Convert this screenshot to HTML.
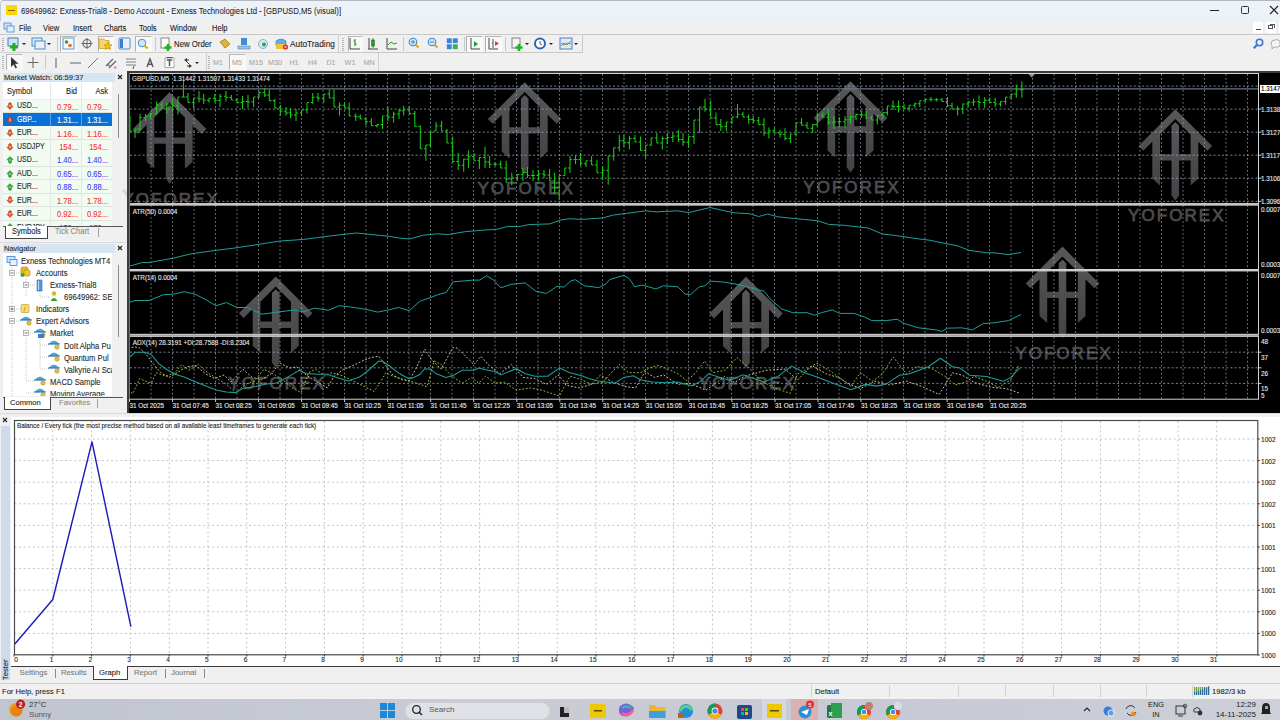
<!DOCTYPE html><html><head><meta charset="utf-8"><style>
*{margin:0;padding:0;box-sizing:border-box}
html,body{width:1280px;height:720px;overflow:hidden}
body{position:relative;background:#f0f0f0;font-family:"Liberation Sans",sans-serif;color:#000}
.a{position:absolute;white-space:nowrap;line-height:1;-webkit-text-stroke:0.1px currentColor}
.b{position:absolute}
svg{position:absolute;overflow:hidden}
</style></head><body>
<div class="b" style="left:0px;top:0px;width:1280px;height:21px;background:#edf2f9;border-top:1px solid #b4b8c0;border-left:1px solid #c8ccd2;border-top-left-radius:4px"></div>
<div class="b" style="left:6px;top:5px;width:11px;height:10px;background:#ffd500"></div>
<div class="b" style="left:8px;top:9.6px;width:7px;height:0.9px;background:#7a6a10"></div>
<div class="a" style="left:21.0px;top:6.8px;font-size:8.5px;color:#222;-webkit-text-stroke:0.05px #222;transform:scaleX(0.913);transform-origin:left center;">69649962: Exness-Trial8 - Demo Account - Exness Technologies Ltd - [GBPUSD,M5 (visual)]</div>
<div class="b" style="left:1210px;top:10px;width:9px;height:1.2px;background:#222"></div>
<div class="b" style="left:1240.5px;top:6px;width:8px;height:8px;border:1.2px solid #333;border-radius:1.5px"></div>
<svg style="left:1268px;top:5px" width="12" height="11"><path d="M2 1 L10 9 M10 1 L2 9" stroke="#222" stroke-width="1.2"/></svg>
<div class="b" style="left:0px;top:21px;width:1280px;height:13px;background:#f0f0f0"></div>
<svg style="left:3px;top:22px" width="12" height="11"><rect x="1" y="1" width="7" height="6" fill="#cfe0f4" stroke="#4a8ad0" stroke-width="0.8"/><rect x="4" y="4" width="7" height="6" fill="#e6f0fb" stroke="#4a8ad0" stroke-width="0.8"/></svg>
<div class="a" style="left:19.4px;top:23.7px;font-size:8.4px;color:#1a1a1a;transform:scaleX(0.9);transform-origin:left center;">File</div>
<div class="a" style="left:43.0px;top:23.7px;font-size:8.4px;color:#1a1a1a;transform:scaleX(0.9);transform-origin:left center;">View</div>
<div class="a" style="left:72.5px;top:23.7px;font-size:8.4px;color:#1a1a1a;transform:scaleX(0.9);transform-origin:left center;">Insert</div>
<div class="a" style="left:104.0px;top:23.7px;font-size:8.4px;color:#1a1a1a;transform:scaleX(0.9);transform-origin:left center;">Charts</div>
<div class="a" style="left:139.0px;top:23.7px;font-size:8.4px;color:#1a1a1a;transform:scaleX(0.9);transform-origin:left center;">Tools</div>
<div class="a" style="left:170.0px;top:23.7px;font-size:8.4px;color:#1a1a1a;transform:scaleX(0.9);transform-origin:left center;">Window</div>
<div class="a" style="left:211.5px;top:23.7px;font-size:8.4px;color:#1a1a1a;transform:scaleX(0.9);transform-origin:left center;">Help</div>
<div class="b" style="left:1253px;top:22px;width:10px;height:11px;background:#fff"></div>
<div class="b" style="left:1256px;top:29px;width:5px;height:1.2px;background:#445"></div>
<div class="b" style="left:1266px;top:22px;width:10px;height:11px;background:#fff"></div>
<div class="b" style="left:1268px;top:25px;width:5px;height:4px;border:1px solid #556"></div>
<div class="b" style="left:1270px;top:24px;width:5px;height:4px;border:1px solid #556;border-left:none;border-bottom:none"></div>
<div class="b" style="left:1279px;top:22px;width:1px;height:11px;background:#fff"></div>
<div class="b" style="left:0px;top:34px;width:1280px;height:1px;background:#c9c9c9"></div>
<div class="b" style="left:0px;top:35px;width:1280px;height:36px;background:#f0f0f0"></div>
<div class="b" style="left:0px;top:35px;width:339px;height:18px;border-right:1px solid #d0d0d0;border-bottom:1px solid #d0d0d0"></div>
<div class="b" style="left:339px;top:35px;width:244px;height:18px;border-right:1px solid #c8c8c8;border-bottom:1px solid #c8c8c8"></div>
<div class="b" style="left:0px;top:53px;width:207px;height:18px;border-right:1px solid #d0d0d0"></div>
<div class="b" style="left:207px;top:53px;width:172px;height:18px;border-right:1px solid #d0d0d0"></div>
<div class="b" style="left:2px;top:38px;width:2px;height:13px;background:repeating-linear-gradient(#b4b4b4 0 1px,transparent 1px 2px)"></div>
<div class="b" style="left:2px;top:56px;width:2px;height:13px;background:repeating-linear-gradient(#b4b4b4 0 1px,transparent 1px 2px)"></div>
<div class="b" style="left:342px;top:38px;width:2px;height:13px;background:repeating-linear-gradient(#b4b4b4 0 1px,transparent 1px 2px)"></div>
<div class="b" style="left:208px;top:56px;width:2px;height:13px;background:repeating-linear-gradient(#b4b4b4 0 1px,transparent 1px 2px)"></div>
<div class="b" style="left:57px;top:37px;width:1px;height:14px;background:#c8c8c8"></div>
<div class="b" style="left:155px;top:37px;width:1px;height:14px;background:#c8c8c8"></div>
<div class="b" style="left:403px;top:37px;width:1px;height:14px;background:#c8c8c8"></div>
<div class="b" style="left:464px;top:37px;width:1px;height:14px;background:#c8c8c8"></div>
<div class="b" style="left:505px;top:37px;width:1px;height:14px;background:#c8c8c8"></div>
<div class="b" style="left:45px;top:55px;width:1px;height:14px;background:#c8c8c8"></div>
<div class="b" style="left:60px;top:36px;width:17px;height:16px;background:#f8f8f8;border-left:1px solid #b0b0b0;border-top:1px solid #b8b8b8;border-right:1px solid #fafafa;border-bottom:1px solid #fafafa"></div>
<div class="b" style="left:98px;top:36px;width:16px;height:16px;background:#f8f8f8;border-left:1px solid #b0b0b0;border-top:1px solid #b8b8b8;border-right:1px solid #fafafa;border-bottom:1px solid #fafafa"></div>
<div class="b" style="left:135px;top:36px;width:17px;height:16px;background:#f8f8f8;border-left:1px solid #b0b0b0;border-top:1px solid #b8b8b8;border-right:1px solid #fafafa;border-bottom:1px solid #fafafa"></div>
<div class="b" style="left:348px;top:36px;width:15px;height:16px;background:#f8f8f8;border-left:1px solid #b0b0b0;border-top:1px solid #b8b8b8;border-right:1px solid #fafafa;border-bottom:1px solid #fafafa"></div>
<div class="b" style="left:466px;top:36px;width:17px;height:16px;background:#f8f8f8;border-left:1px solid #b0b0b0;border-top:1px solid #b8b8b8;border-right:1px solid #fafafa;border-bottom:1px solid #fafafa"></div>
<div class="b" style="left:485px;top:36px;width:17px;height:16px;background:#f8f8f8;border-left:1px solid #b0b0b0;border-top:1px solid #b8b8b8;border-right:1px solid #fafafa;border-bottom:1px solid #fafafa"></div>
<div class="b" style="left:6px;top:54px;width:17px;height:16px;background:#f8f8f8;border-left:1px solid #b0b0b0;border-top:1px solid #b8b8b8;border-right:1px solid #fafafa;border-bottom:1px solid #fafafa"></div>
<div class="b" style="left:229px;top:54px;width:17px;height:16px;background:#f8f8f8;border-left:1px solid #b0b0b0;border-top:1px solid #b8b8b8;border-right:1px solid #fafafa;border-bottom:1px solid #fafafa"></div>
<svg style="left:0;top:35px" width="600" height="17">
<rect x="8" y="3" width="10" height="8" fill="#cfe3f7" stroke="#3b82c4" stroke-width="1"/>
<path d="M14 8 v8 M10 12 h8" stroke="#1fae1f" stroke-width="3"/>
<path d="M22 8 l2 2 l2 -2z" fill="#222"/>
<rect x="32" y="3" width="10" height="8" fill="#dbe8f6" stroke="#4d8ccc" stroke-width="1"/>
<rect x="35" y="6" width="10" height="8" fill="#e8f0fa" stroke="#4d8ccc" stroke-width="1"/>
<path d="M47 8 l2 2 l2 -2z" fill="#222"/>
<rect x="63" y="3" width="11" height="11" fill="#f4f8fc" stroke="#5a9ad8" stroke-width="1"/>
<circle cx="66.5" cy="7" r="1.8" fill="#2aa52a"/><circle cx="70" cy="10.5" r="1.8" fill="#e86a30"/>
<circle cx="87" cy="8.5" r="4" fill="none" stroke="#666" stroke-width="1.2"/><path d="M87 3 v11 M81.5 8.5 h11" stroke="#666" stroke-width="1"/>
<path d="M99 4 h5 l1 1.5 h4 v8 h-10z" fill="#f7d56a" stroke="#c9a02a" stroke-width="0.8"/>
<path d="M108 7 l1.3 2.6 2.8 .3 -2.1 1.9 .6 2.8 -2.6 -1.4 -2.6 1.4 .6 -2.8 -2.1 -1.9 2.8 -.3z" fill="#f2c010" stroke="#b08800" stroke-width="0.5"/>
<rect x="119" y="3" width="11" height="11" rx="1" fill="#e9f2fb" stroke="#4a8ad0" stroke-width="1"/><rect x="120" y="4" width="3" height="9" fill="#3b7fd0"/>
<circle cx="142" cy="8" r="3.8" fill="#cfe6f8" stroke="#4a90d0" stroke-width="1"/><path d="M144.5 10.5 l3 3" stroke="#d9a520" stroke-width="2"/>
<rect x="161" y="3" width="8" height="10" fill="#fff" stroke="#777" stroke-width="0.9"/><path d="M168 9 v7 M164.5 12.5 h7" stroke="#20b020" stroke-width="2.6"/>
<path d="M220 7 l5 -3 l5 5 l-5 4z" fill="#e2b040" stroke="#a87a10" stroke-width="0.8"/>
<rect x="241" y="3" width="6" height="7" fill="#3d8ed8"/><path d="M238 11 h12 v3 h-12z" fill="#9cc4ea" stroke="#4a80c0" stroke-width="0.6"/>
<circle cx="263" cy="9" r="4.5" fill="#d7e8f5" stroke="#6aa0c8" stroke-width="0.8"/><circle cx="264" cy="9.5" r="2" fill="#30a050"/>
<path d="M276 6 q5 -4 10 0 v5 h-10z" fill="#5ab0e0" stroke="#2a78b0" stroke-width="0.6"/><rect x="276" y="9" width="9" height="5" fill="#f0c040"/><circle cx="285.5" cy="12" r="2.6" fill="#e03020"/><rect x="284.3" y="11.5" width="2.4" height="1" fill="#fff"/>
<path d="M350 3 v11 h10" stroke="#444" stroke-width="1" fill="none"/><path d="M355 4 v7 M353.5 6 h1.5 M355 9 h1.5" stroke="#22a022" stroke-width="1.2"/>
<path d="M368 14 h10 M369 3 v11" stroke="#444" stroke-width="1"/><rect x="371.5" y="5" width="3" height="6" fill="#34b434" stroke="#1b7a1b" stroke-width="0.6"/><path d="M373 3 v10" stroke="#1b7a1b" stroke-width="0.8"/>
<path d="M387 3 v11 h10" stroke="#444" stroke-width="1" fill="none"/><path d="M388 10 l3 -3 l3 2 l3 -1" stroke="#22a022" stroke-width="1" fill="none"/>
<circle cx="413" cy="7" r="3.8" fill="#cde4f7" stroke="#3c88d0" stroke-width="1.1"/><path d="M411 7 h4 M413 5 v4" stroke="#3c88d0" stroke-width="1"/><path d="M415.5 9.5 l3 3" stroke="#d4a020" stroke-width="2"/>
<circle cx="432" cy="7" r="3.8" fill="#cde4f7" stroke="#3c88d0" stroke-width="1.1"/><path d="M430 7 h4" stroke="#3c88d0" stroke-width="1"/><path d="M434.5 9.5 l3 3" stroke="#d4a020" stroke-width="2"/>
<rect x="446.5" y="3" width="5.5" height="5.5" fill="#3b82d8" stroke="#fff" stroke-width="0.5"/><rect x="452.5" y="3" width="5.5" height="5.5" fill="#3b82d8" stroke="#fff" stroke-width="0.5"/><rect x="446.5" y="9" width="5.5" height="5.5" fill="#3b82d8" stroke="#fff" stroke-width="0.5"/><rect x="452.5" y="9" width="5.5" height="5.5" fill="#3cb050" stroke="#fff" stroke-width="0.5"/>
<path d="M471 3 v11 h9" stroke="#444" stroke-width="1" fill="none"/><path d="M474 6 l4 3 l-4 3z" fill="#20a040"/>
<path d="M489 3 v11 h9" stroke="#444" stroke-width="1" fill="none"/><path d="M493 4 v9 M492 8 h1" stroke="#555" stroke-width="1"/><path d="M495 6 l4 2.5 l-4 2.5z" fill="#d84040"/>
<rect x="512" y="3" width="8" height="10" fill="#f4f4f4" stroke="#777" stroke-width="0.9"/><path d="M519 9 v7 M515.5 12.5 h7" stroke="#20b020" stroke-width="2.6"/>
<path d="M525 8 l2 2 l2 -2z" fill="#222"/>
<circle cx="540" cy="8.5" r="5" fill="#fff" stroke="#2a66b8" stroke-width="2"/><path d="M540 6 v3 l2 1" stroke="#333" stroke-width="0.8" fill="none"/>
<path d="M549 8 l2 2 l2 -2z" fill="#222"/>
<rect x="560" y="3" width="12" height="11" fill="#dce9f6" stroke="#4a80c0" stroke-width="1"/><path d="M561 11 l3 -3 l3 2 l4 -4" stroke="#d04040" stroke-width="0.8" fill="none"/><path d="M561 8 l3 2 l3 -2 l4 1" stroke="#30a040" stroke-width="0.8" fill="none"/>
<path d="M574 8 l2 2 l2 -2z" fill="#222"/>
</svg>
<div class="a" style="left:173.8px;top:39.7px;font-size:8.6px;color:#1e1e1e;transform:scaleX(0.907);transform-origin:left center;">New Order</div>
<div class="a" style="left:290.2px;top:39.7px;font-size:8.6px;color:#1e1e1e;transform:scaleX(0.965);transform-origin:left center;">AutoTrading</div>
<svg style="left:1250px;top:36px" width="30" height="16"><circle cx="9.5" cy="6.5" r="3.2" fill="none" stroke="#3a78d0" stroke-width="1.6"/><path d="M7.2 8.8 l-3.5 3.5" stroke="#3a78d0" stroke-width="2.2"/><path d="M22 5 q5 -3 8 0 v5 q-3 2 -6 1 l-2 2 v-3 q-2 -1 0 -5z" fill="#f4f4f4" stroke="#999" stroke-width="0.8"/></svg>
<svg style="left:0;top:54px" width="210" height="17">
<path d="M11 3 v10 l2.5 -2.5 l2 4 l1.5 -0.7 l-2 -4 h3.5z" fill="#333"/>
<path d="M33 3 v11 M27.5 8.5 h11" stroke="#666" stroke-width="1"/>
<path d="M56 4 v10" stroke="#777" stroke-width="1.2"/>
<path d="M70 9 h11" stroke="#777" stroke-width="1.2"/>
<path d="M88 14 l10 -10" stroke="#777" stroke-width="1"/>
<path d="M106 12 l7 -7 M109 14 l7 -7 M107.5 10 l2 2" stroke="#666" stroke-width="1.3"/><text x="114" y="15" font-size="4" fill="#666" font-family="Liberation Sans">E</text>
<path d="M126 5 h10 M126 8 h10 M126 11 h10" stroke="#777" stroke-width="0.9"/><path d="M134 12 l-1 3" stroke="#555" stroke-width="1"/>
<path d="M147 13 L150 5 L153 13 M148.2 10.3 H151.8" stroke="#555" stroke-width="1.4" fill="none"/>
<rect x="165" y="4" width="9" height="9.5" fill="#fff" stroke="#999" stroke-width="0.8"/><path d="M166.5 3.5 h6" stroke="#555" stroke-width="1"/><path d="M166.8 6 H172.2 M169.5 6 V12" stroke="#555" stroke-width="1.5"/>
<path d="M184 6 l3 -2 v1.5 h2 v1 h-2 v1.5z M192 12 l-3 2 v-1.5 h-2 v-1 h2 v-1.5z" fill="#333"/><path d="M186 7 l3 3" stroke="#333" stroke-width="1"/>
<path d="M195 8 l2 2 l2 -2z" fill="#222"/>
</svg>
<div class="a" style="left:118.0px;width:200px;text-align:center;top:58.7px;font-size:7.2px;color:#a8a8a8;">M1</div>
<div class="a" style="left:137.0px;width:200px;text-align:center;top:58.7px;font-size:7.2px;color:#a8a8a8;">M5</div>
<div class="a" style="left:156.0px;width:200px;text-align:center;top:58.7px;font-size:7.2px;color:#a8a8a8;">M15</div>
<div class="a" style="left:175.0px;width:200px;text-align:center;top:58.7px;font-size:7.2px;color:#a8a8a8;">M30</div>
<div class="a" style="left:194.0px;width:200px;text-align:center;top:58.7px;font-size:7.2px;color:#a8a8a8;">H1</div>
<div class="a" style="left:212.5px;width:200px;text-align:center;top:58.7px;font-size:7.2px;color:#a8a8a8;">H4</div>
<div class="a" style="left:231.0px;width:200px;text-align:center;top:58.7px;font-size:7.2px;color:#a8a8a8;">D1</div>
<div class="a" style="left:250.0px;width:200px;text-align:center;top:58.7px;font-size:7.2px;color:#a8a8a8;">W1</div>
<div class="a" style="left:269.0px;width:200px;text-align:center;top:58.7px;font-size:7.2px;color:#a8a8a8;">MN</div>
<div class="b" style="left:0px;top:71px;width:127px;height:342px;background:#f0f0f0"></div>
<div class="b" style="left:3px;top:73px;width:112px;height:9px;background:#d7e4f1"></div>
<div class="a" style="left:4.0px;top:73.5px;font-size:7.5px;color:#2a2a2a;">Market Watch: 06:59:37</div>
<svg style="left:116px;top:73px" width="9" height="9"><path d="M2 2 L6 6 M6 2 L2 6" stroke="#222" stroke-width="1.1"/></svg>
<div class="b" style="left:3px;top:82px;width:109px;height:143px;background:#fff"></div>
<div class="b" style="left:3px;top:98.8px;width:109px;height:1px;background:#ececec"></div>
<div class="b" style="left:50px;top:83px;width:1px;height:142px;background:#e6e6e6"></div>
<div class="b" style="left:80.5px;top:83px;width:1px;height:142px;background:#e6e6e6"></div>
<div class="a" style="left:7.0px;top:87.9px;font-size:8.2px;color:#222;transform:scaleX(0.92);transform-origin:left center;">Symbol</div>
<div class="a" style="left:-223.0px;width:300px;text-align:right;top:87.9px;font-size:8.2px;color:#222;transform:scaleX(0.92);transform-origin:right center;">Bid</div>
<div class="a" style="left:-192.0px;width:300px;text-align:right;top:87.9px;font-size:8.2px;color:#222;transform:scaleX(0.92);transform-origin:right center;">Ask</div>
<div class="b" style="left:112px;top:82px;width:11px;height:143px;background:#f0f0f0"></div>
<div class="b" style="left:117.5px;top:94px;width:1.5px;height:44px;background:#8c8c8c"></div>
<div class="b" style="left:0;top:0;width:127px;height:225.5px;overflow:hidden">
<div class="b" style="left:3px;top:99.5px;width:47px;height:12.95px;background:#f2fbf2"></div>
<div class="b" style="left:51px;top:99.5px;width:29.5px;height:12.95px;background:#f2fbf2"></div>
<div class="b" style="left:81.5px;top:99.5px;width:30.5px;height:12.95px;background:#f2fbf2"></div>
<svg style="left:5.5px;top:102.2px" width="8" height="8" viewBox="0 0 9 9"><path d="M4.5 8.4 L8.2 4.7 L6.2 4.7 L6.2 1.8 L4.5 0.4 L2.8 1.8 L2.8 4.7 L0.8 4.7 Z" fill="#e2502a" stroke="#a83010" stroke-width="0.5"/><circle cx="4.5" cy="4.4" r="1.3" fill="#ff9a70"/></svg>
<div class="b" style="left:3px;top:112.15px;width:109px;height:0.8px;background:#dde3dd"></div>
<div class="a" style="left:17.0px;top:102.4px;font-size:8.2px;color:#2a2a2a;transform:scaleX(0.86);transform-origin:left center;">USD...</div>
<div class="a" style="left:-222.0px;width:300px;text-align:right;top:102.6px;font-size:8.4px;color:#fa3232;transform:scaleX(0.9);transform-origin:right center;">0.79...</div>
<div class="a" style="left:-192.0px;width:300px;text-align:right;top:102.6px;font-size:8.4px;color:#fa3232;transform:scaleX(0.9);transform-origin:right center;">0.79...</div>
<div class="b" style="left:3px;top:112.95px;width:109px;height:13.45px;background:#0a70d6"></div>
<div class="b" style="left:50px;top:112.95px;width:1px;height:13.45px;background:#5a9ee4"></div>
<div class="b" style="left:80.5px;top:112.95px;width:1px;height:13.45px;background:#5a9ee4"></div>
<svg style="left:5.5px;top:115.7px" width="8" height="8" viewBox="0 0 9 9"><path d="M4.5 8.4 L8.2 4.7 L6.2 4.7 L6.2 1.8 L4.5 0.4 L2.8 1.8 L2.8 4.7 L0.8 4.7 Z" fill="#e2502a" stroke="#a83010" stroke-width="0.5"/><circle cx="4.5" cy="4.4" r="1.3" fill="#ff9a70"/></svg>
<div class="a" style="left:17.0px;top:115.9px;font-size:8.2px;color:#ffffff;transform:scaleX(0.86);transform-origin:left center;">GBP...</div>
<div class="a" style="left:-222.0px;width:300px;text-align:right;top:116.1px;font-size:8.4px;color:#ffffff;transform:scaleX(0.9);transform-origin:right center;">1.31...</div>
<div class="a" style="left:-192.0px;width:300px;text-align:right;top:116.1px;font-size:8.4px;color:#ffffff;transform:scaleX(0.9);transform-origin:right center;">1.31...</div>
<div class="b" style="left:3px;top:126.4px;width:47px;height:12.95px;background:#f2fbf2"></div>
<div class="b" style="left:51px;top:126.4px;width:29.5px;height:12.95px;background:#f2fbf2"></div>
<div class="b" style="left:81.5px;top:126.4px;width:30.5px;height:12.95px;background:#f2fbf2"></div>
<svg style="left:5.5px;top:129.1px" width="8" height="8" viewBox="0 0 9 9"><path d="M4.5 8.4 L8.2 4.7 L6.2 4.7 L6.2 1.8 L4.5 0.4 L2.8 1.8 L2.8 4.7 L0.8 4.7 Z" fill="#e2502a" stroke="#a83010" stroke-width="0.5"/><circle cx="4.5" cy="4.4" r="1.3" fill="#ff9a70"/></svg>
<div class="b" style="left:3px;top:139.04999999999998px;width:109px;height:0.8px;background:#dde3dd"></div>
<div class="a" style="left:17.0px;top:129.3px;font-size:8.2px;color:#2a2a2a;transform:scaleX(0.86);transform-origin:left center;">EUR...</div>
<div class="a" style="left:-222.0px;width:300px;text-align:right;top:129.5px;font-size:8.4px;color:#fa3232;transform:scaleX(0.9);transform-origin:right center;">1.16...</div>
<div class="a" style="left:-192.0px;width:300px;text-align:right;top:129.5px;font-size:8.4px;color:#fa3232;transform:scaleX(0.9);transform-origin:right center;">1.16...</div>
<div class="b" style="left:3px;top:139.85px;width:47px;height:12.95px;background:#f2fbf2"></div>
<div class="b" style="left:51px;top:139.85px;width:29.5px;height:12.95px;background:#f2fbf2"></div>
<div class="b" style="left:81.5px;top:139.85px;width:30.5px;height:12.95px;background:#f2fbf2"></div>
<svg style="left:5.5px;top:142.6px" width="8" height="8" viewBox="0 0 9 9"><path d="M4.5 8.4 L8.2 4.7 L6.2 4.7 L6.2 1.8 L4.5 0.4 L2.8 1.8 L2.8 4.7 L0.8 4.7 Z" fill="#e2502a" stroke="#a83010" stroke-width="0.5"/><circle cx="4.5" cy="4.4" r="1.3" fill="#ff9a70"/></svg>
<div class="b" style="left:3px;top:152.49999999999997px;width:109px;height:0.8px;background:#dde3dd"></div>
<div class="a" style="left:17.0px;top:142.8px;font-size:8.2px;color:#2a2a2a;transform:scaleX(0.86);transform-origin:left center;">USDJPY</div>
<div class="a" style="left:-222.0px;width:300px;text-align:right;top:143.0px;font-size:8.4px;color:#fa3232;transform:scaleX(0.9);transform-origin:right center;">154...</div>
<div class="a" style="left:-192.0px;width:300px;text-align:right;top:143.0px;font-size:8.4px;color:#fa3232;transform:scaleX(0.9);transform-origin:right center;">154...</div>
<div class="b" style="left:3px;top:153.3px;width:47px;height:12.95px;background:#f2fbf2"></div>
<div class="b" style="left:51px;top:153.3px;width:29.5px;height:12.95px;background:#f2fbf2"></div>
<div class="b" style="left:81.5px;top:153.3px;width:30.5px;height:12.95px;background:#f2fbf2"></div>
<svg style="left:5.5px;top:156.0px" width="8" height="8" viewBox="0 0 9 9"><path d="M4.5 0.6 L8.2 4.3 L6.2 4.3 L6.2 7.2 L4.5 8.6 L2.8 7.2 L2.8 4.3 L0.8 4.3 Z" fill="#34a83a" stroke="#1f7a26" stroke-width="0.5"/><circle cx="4.5" cy="4.6" r="1.3" fill="#7ad47e"/></svg>
<div class="b" style="left:3px;top:165.95px;width:109px;height:0.8px;background:#dde3dd"></div>
<div class="a" style="left:17.0px;top:156.2px;font-size:8.2px;color:#2a2a2a;transform:scaleX(0.86);transform-origin:left center;">USD...</div>
<div class="a" style="left:-222.0px;width:300px;text-align:right;top:156.4px;font-size:8.4px;color:#4038f8;transform:scaleX(0.9);transform-origin:right center;">1.40...</div>
<div class="a" style="left:-192.0px;width:300px;text-align:right;top:156.4px;font-size:8.4px;color:#4038f8;transform:scaleX(0.9);transform-origin:right center;">1.40...</div>
<div class="b" style="left:3px;top:166.75px;width:47px;height:12.95px;background:#f2fbf2"></div>
<div class="b" style="left:51px;top:166.75px;width:29.5px;height:12.95px;background:#f2fbf2"></div>
<div class="b" style="left:81.5px;top:166.75px;width:30.5px;height:12.95px;background:#f2fbf2"></div>
<svg style="left:5.5px;top:169.5px" width="8" height="8" viewBox="0 0 9 9"><path d="M4.5 0.6 L8.2 4.3 L6.2 4.3 L6.2 7.2 L4.5 8.6 L2.8 7.2 L2.8 4.3 L0.8 4.3 Z" fill="#34a83a" stroke="#1f7a26" stroke-width="0.5"/><circle cx="4.5" cy="4.6" r="1.3" fill="#7ad47e"/></svg>
<div class="b" style="left:3px;top:179.39999999999998px;width:109px;height:0.8px;background:#dde3dd"></div>
<div class="a" style="left:17.0px;top:169.7px;font-size:8.2px;color:#2a2a2a;transform:scaleX(0.86);transform-origin:left center;">AUD...</div>
<div class="a" style="left:-222.0px;width:300px;text-align:right;top:169.9px;font-size:8.4px;color:#4038f8;transform:scaleX(0.9);transform-origin:right center;">0.65...</div>
<div class="a" style="left:-192.0px;width:300px;text-align:right;top:169.9px;font-size:8.4px;color:#4038f8;transform:scaleX(0.9);transform-origin:right center;">0.65...</div>
<div class="b" style="left:3px;top:180.2px;width:47px;height:12.95px;background:#f2fbf2"></div>
<div class="b" style="left:51px;top:180.2px;width:29.5px;height:12.95px;background:#f2fbf2"></div>
<div class="b" style="left:81.5px;top:180.2px;width:30.5px;height:12.95px;background:#f2fbf2"></div>
<svg style="left:5.5px;top:182.9px" width="8" height="8" viewBox="0 0 9 9"><path d="M4.5 0.6 L8.2 4.3 L6.2 4.3 L6.2 7.2 L4.5 8.6 L2.8 7.2 L2.8 4.3 L0.8 4.3 Z" fill="#34a83a" stroke="#1f7a26" stroke-width="0.5"/><circle cx="4.5" cy="4.6" r="1.3" fill="#7ad47e"/></svg>
<div class="b" style="left:3px;top:192.84999999999997px;width:109px;height:0.8px;background:#dde3dd"></div>
<div class="a" style="left:17.0px;top:183.1px;font-size:8.2px;color:#2a2a2a;transform:scaleX(0.86);transform-origin:left center;">EUR...</div>
<div class="a" style="left:-222.0px;width:300px;text-align:right;top:183.3px;font-size:8.4px;color:#4038f8;transform:scaleX(0.9);transform-origin:right center;">0.88...</div>
<div class="a" style="left:-192.0px;width:300px;text-align:right;top:183.3px;font-size:8.4px;color:#4038f8;transform:scaleX(0.9);transform-origin:right center;">0.88...</div>
<div class="b" style="left:3px;top:193.64999999999998px;width:47px;height:12.95px;background:#f2fbf2"></div>
<div class="b" style="left:51px;top:193.64999999999998px;width:29.5px;height:12.95px;background:#f2fbf2"></div>
<div class="b" style="left:81.5px;top:193.64999999999998px;width:30.5px;height:12.95px;background:#f2fbf2"></div>
<svg style="left:5.5px;top:196.4px" width="8" height="8" viewBox="0 0 9 9"><path d="M4.5 8.4 L8.2 4.7 L6.2 4.7 L6.2 1.8 L4.5 0.4 L2.8 1.8 L2.8 4.7 L0.8 4.7 Z" fill="#e2502a" stroke="#a83010" stroke-width="0.5"/><circle cx="4.5" cy="4.4" r="1.3" fill="#ff9a70"/></svg>
<div class="b" style="left:3px;top:206.29999999999995px;width:109px;height:0.8px;background:#dde3dd"></div>
<div class="a" style="left:17.0px;top:196.6px;font-size:8.2px;color:#2a2a2a;transform:scaleX(0.86);transform-origin:left center;">EUR...</div>
<div class="a" style="left:-222.0px;width:300px;text-align:right;top:196.8px;font-size:8.4px;color:#fa3232;transform:scaleX(0.9);transform-origin:right center;">1.78...</div>
<div class="a" style="left:-192.0px;width:300px;text-align:right;top:196.8px;font-size:8.4px;color:#fa3232;transform:scaleX(0.9);transform-origin:right center;">1.78...</div>
<div class="b" style="left:3px;top:207.1px;width:47px;height:12.95px;background:#f2fbf2"></div>
<div class="b" style="left:51px;top:207.1px;width:29.5px;height:12.95px;background:#f2fbf2"></div>
<div class="b" style="left:81.5px;top:207.1px;width:30.5px;height:12.95px;background:#f2fbf2"></div>
<svg style="left:5.5px;top:209.8px" width="8" height="8" viewBox="0 0 9 9"><path d="M4.5 8.4 L8.2 4.7 L6.2 4.7 L6.2 1.8 L4.5 0.4 L2.8 1.8 L2.8 4.7 L0.8 4.7 Z" fill="#e2502a" stroke="#a83010" stroke-width="0.5"/><circle cx="4.5" cy="4.4" r="1.3" fill="#ff9a70"/></svg>
<div class="b" style="left:3px;top:219.74999999999997px;width:109px;height:0.8px;background:#dde3dd"></div>
<div class="a" style="left:17.0px;top:210.0px;font-size:8.2px;color:#2a2a2a;transform:scaleX(0.86);transform-origin:left center;">EUR...</div>
<div class="a" style="left:-222.0px;width:300px;text-align:right;top:210.2px;font-size:8.4px;color:#fa3232;transform:scaleX(0.9);transform-origin:right center;">0.92...</div>
<div class="a" style="left:-192.0px;width:300px;text-align:right;top:210.2px;font-size:8.4px;color:#fa3232;transform:scaleX(0.9);transform-origin:right center;">0.92...</div>
<div class="b" style="left:3px;top:220.55px;width:47px;height:12.95px;background:#f2fbf2"></div>
<div class="b" style="left:51px;top:220.55px;width:29.5px;height:12.95px;background:#f2fbf2"></div>
<div class="b" style="left:81.5px;top:220.55px;width:30.5px;height:12.95px;background:#f2fbf2"></div>
<svg style="left:5.5px;top:223.3px" width="8" height="8" viewBox="0 0 9 9"><path d="M4.5 0.6 L8.2 4.3 L6.2 4.3 L6.2 7.2 L4.5 8.6 L2.8 7.2 L2.8 4.3 L0.8 4.3 Z" fill="#34a83a" stroke="#1f7a26" stroke-width="0.5"/><circle cx="4.5" cy="4.6" r="1.3" fill="#7ad47e"/></svg>
<div class="b" style="left:3px;top:233.2px;width:109px;height:0.8px;background:#dde3dd"></div>
<div class="a" style="left:17.0px;top:223.5px;font-size:8.2px;color:#2a2a2a;transform:scaleX(0.86);transform-origin:left center;">EURJPY</div>
<div class="a" style="left:-222.0px;width:300px;text-align:right;top:223.7px;font-size:8.4px;color:#4038f8;transform:scaleX(0.9);transform-origin:right center;">179...</div>
<div class="a" style="left:-192.0px;width:300px;text-align:right;top:223.7px;font-size:8.4px;color:#4038f8;transform:scaleX(0.9);transform-origin:right center;">179...</div>
</div>
<div class="b" style="left:3px;top:225.5px;width:120px;height:1px;background:#555"></div>
<div class="b" style="left:4.5px;top:225.5px;width:43px;height:13px;background:#fff;border:1px solid #444;border-top:none"></div>
<div class="a" style="left:11.5px;top:228.4px;font-size:8.2px;color:#222;transform:scaleX(0.92);transform-origin:left center;">Symbols</div>
<div class="a" style="left:55.4px;top:228.4px;font-size:8.2px;color:#8c8c8c;transform:scaleX(0.92);transform-origin:left center;">Tick Chart</div>
<div class="b" style="left:97.5px;top:228px;width:1px;height:9px;background:#a0a0a0"></div>
<div class="b" style="left:0px;top:241.5px;width:127px;height:1px;background:#dcdcdc"></div>
<div class="b" style="left:3px;top:244px;width:112px;height:8.5px;background:#d7e4f1"></div>
<div class="a" style="left:4.0px;top:244.6px;font-size:7.5px;color:#2a2a2a;">Navigator</div>
<svg style="left:116px;top:244px" width="9" height="9"><path d="M2 2 L6 6 M6 2 L2 6" stroke="#222" stroke-width="1.1"/></svg>
<div class="b" style="left:3px;top:253px;width:109px;height:143px;background:#fff"></div>
<div class="b" style="left:112px;top:253px;width:11px;height:143px;background:#f0f0f0"></div>
<div class="b" style="left:117.5px;top:265px;width:1.5px;height:72px;background:#8c8c8c"></div>
<svg style="left:0;top:253px" width="112" height="143">
<g stroke="#b8b8b8" stroke-width="0.8" stroke-dasharray="1 1" fill="none">
<path d="M12 14 V68 M12 20 H22 M12 56 H22 M12 68 H22"/>
<path d="M12 68 V143 M26 80 V128 M26 128 H36 M26 140 H36 M26 80 H36"/>
<path d="M26 26 V44 M26 32 H36 M40 38 V44 M40 44 H50"/>
<path d="M40 86 V116 M40 92 H50 M40 104 H50 M40 116 H50"/>
</g>
<rect x="9.5" y="17.5" width="5" height="5" fill="#fff" stroke="#999" stroke-width="0.7"/><path d="M10.5 20 h3" stroke="#333" stroke-width="0.7"/>
<rect x="23.5" y="29.5" width="5" height="5" fill="#fff" stroke="#999" stroke-width="0.7"/><path d="M24.5 32 h3" stroke="#333" stroke-width="0.7"/>
<rect x="9.5" y="53.5" width="5" height="5" fill="#fff" stroke="#999" stroke-width="0.7"/><path d="M10.5 56 h3 M12 54.5 v3" stroke="#333" stroke-width="0.7"/>
<rect x="9.5" y="65.5" width="5" height="5" fill="#fff" stroke="#999" stroke-width="0.7"/><path d="M10.5 68 h3" stroke="#333" stroke-width="0.7"/>
<rect x="23.5" y="77.5" width="5" height="5" fill="#fff" stroke="#999" stroke-width="0.7"/><path d="M24.5 80 h3" stroke="#333" stroke-width="0.7"/>
<rect x="7" y="3.5" width="8" height="6" fill="#d0e4f8" stroke="#3a86d0" stroke-width="0.8"/><rect x="10" y="6.5" width="7" height="6" fill="#e4f0fb" stroke="#3a86d0" stroke-width="0.8"/>
<rect x="21" y="14" width="7" height="7" rx="1.5" fill="#e8b820" stroke="#b08010" stroke-width="0.6"/><rect x="24" y="17" width="6" height="6" rx="1.5" fill="#f0c830" stroke="#b08010" stroke-width="0.6"/><circle cx="22.5" cy="22" r="2" fill="#2ab02a"/>
<path d="M37 27 h5 v11 h-5z" fill="#4a9be0" stroke="#2a70b8" stroke-width="0.6"/><path d="M38.5 28 v9" stroke="#e6f2fc" stroke-width="0.8"/>
<circle cx="54" cy="40.5" r="2.3" fill="#e0b030"/><path d="M50.5 48 q3.5 -6 7 0z" fill="#30a030"/>
<rect x="21" y="51.5" width="8" height="8" rx="1" fill="#f6df80" stroke="#c8a020" stroke-width="0.7"/><text x="23.5" y="58.3" font-size="7" fill="#b07010" font-family="Liberation Serif" font-style="italic">f</text>

<path d="M21 67 q5 -6 10 0 z" fill="#4aa8e0" stroke="#2a78b0" stroke-width="0.5"/><path d="M20 67 h12" stroke="#2a78b0" stroke-width="1"/><circle cx="29" cy="70" r="2.2" fill="#e8c040" stroke="#a08020" stroke-width="0.5"/><path d="M35 79 q5 -6 10 0 z" fill="#4aa8e0" stroke="#2a78b0" stroke-width="0.5"/><path d="M34 79 h12" stroke="#2a78b0" stroke-width="1"/><circle cx="43" cy="82" r="2.2" fill="#e8c040" stroke="#a08020" stroke-width="0.5"/><rect x="38" y="81" width="6" height="4" fill="#3a7ad0"/><path d="M49 91 q5 -6 10 0 z" fill="#4aa8e0" stroke="#2a78b0" stroke-width="0.5"/><path d="M48 91 h12" stroke="#2a78b0" stroke-width="1"/><circle cx="57" cy="94" r="2.2" fill="#e8c040" stroke="#a08020" stroke-width="0.5"/><path d="M49 103 q5 -6 10 0 z" fill="#4aa8e0" stroke="#2a78b0" stroke-width="0.5"/><path d="M48 103 h12" stroke="#2a78b0" stroke-width="1"/><circle cx="57" cy="106" r="2.2" fill="#e8c040" stroke="#a08020" stroke-width="0.5"/><path d="M49 115 q5 -6 10 0 z" fill="#4aa8e0" stroke="#2a78b0" stroke-width="0.5"/><path d="M48 115 h12" stroke="#2a78b0" stroke-width="1"/><circle cx="57" cy="118" r="2.2" fill="#e8c040" stroke="#a08020" stroke-width="0.5"/><path d="M35 127 q5 -6 10 0 z" fill="#4aa8e0" stroke="#2a78b0" stroke-width="0.5"/><path d="M34 127 h12" stroke="#2a78b0" stroke-width="1"/><circle cx="43" cy="130" r="2.2" fill="#e8c040" stroke="#a08020" stroke-width="0.5"/><path d="M35 139 q5 -6 10 0 z" fill="#4aa8e0" stroke="#2a78b0" stroke-width="0.5"/><path d="M34 139 h12" stroke="#2a78b0" stroke-width="1"/><circle cx="43" cy="142" r="2.2" fill="#e8c040" stroke="#a08020" stroke-width="0.5"/></svg>
<div class="b" style="left:3px;top:253px;width:109px;height:143px;overflow:hidden">
<div class="a" style="left:18.0px;top:3.7px;font-size:8.5px;color:#2a2a2a;transform:scaleX(0.9);transform-origin:left center;">Exness Technologies MT4</div>
<div class="a" style="left:32.5px;top:15.8px;font-size:8.5px;color:#2a2a2a;transform:scaleX(0.9);transform-origin:left center;">Accounts</div>
<div class="a" style="left:46.5px;top:28.0px;font-size:8.5px;color:#2a2a2a;transform:scaleX(0.9);transform-origin:left center;">Exness-Trial8</div>
<div class="a" style="left:60.5px;top:40.0px;font-size:8.5px;color:#2a2a2a;transform:scaleX(0.9);transform-origin:left center;">69649962: SEC</div>
<div class="a" style="left:32.5px;top:52.1px;font-size:8.5px;color:#2a2a2a;transform:scaleX(0.9);transform-origin:left center;">Indicators</div>
<div class="a" style="left:32.5px;top:64.2px;font-size:8.5px;color:#2a2a2a;transform:scaleX(0.9);transform-origin:left center;">Expert Advisors</div>
<div class="a" style="left:46.5px;top:76.3px;font-size:8.5px;color:#2a2a2a;transform:scaleX(0.9);transform-origin:left center;">Market</div>
<div class="a" style="left:60.5px;top:88.5px;font-size:8.5px;color:#2a2a2a;transform:scaleX(0.9);transform-origin:left center;">DoIt Alpha Pu</div>
<div class="a" style="left:60.5px;top:100.5px;font-size:8.5px;color:#2a2a2a;transform:scaleX(0.9);transform-origin:left center;">Quantum Pul</div>
<div class="a" style="left:60.5px;top:112.7px;font-size:8.5px;color:#2a2a2a;transform:scaleX(0.9);transform-origin:left center;">Valkyrie AI Sca</div>
<div class="a" style="left:46.5px;top:124.8px;font-size:8.5px;color:#2a2a2a;transform:scaleX(0.9);transform-origin:left center;">MACD Sample</div>
<div class="a" style="left:46.5px;top:137.0px;font-size:8.5px;color:#2a2a2a;transform:scaleX(0.9);transform-origin:left center;">Moving Average</div>
</div>
<div class="b" style="left:3px;top:396.5px;width:120px;height:1px;background:#555"></div>
<div class="b" style="left:4px;top:396.5px;width:47px;height:13px;background:#fff;border:1px solid #444;border-top:none"></div>
<div class="a" style="left:10.0px;top:399.2px;font-size:7.6px;color:#222;">Common</div>
<div class="a" style="left:59.0px;top:399.2px;font-size:7.6px;color:#8c8c8c;">Favorites</div>
<div class="b" style="left:97px;top:399px;width:1px;height:9px;background:#a0a0a0"></div>
<svg style="left:118px;top:188px" width="9" height="16"><text x="4.4" y="14.3" font-family="Liberation Sans" font-size="17" fill="#d2d2d2" stroke="#d2d2d2" stroke-width="0.75">Y</text></svg>
<div class="b" style="left:127px;top:71px;width:1153px;height:342px;background:#000"></div>
<svg style="left:127px;top:71px" width="1153" height="342"><g transform="translate(-127,-71)"><rect x="127" y="71" width="1153" height="342" fill="#000"/><rect x="127" y="71" width="2" height="342" fill="#3c3c3c"/><rect x="127" y="71" width="1153" height="2" fill="#3c3c3c"/><linearGradient id="lg" gradientUnits="objectBoundingBox" x1="0" y1="0" x2="0" y2="1"><stop offset="0" stop-color="#58585b"/><stop offset="1" stop-color="#444447"/></linearGradient><clipPath id="cm"><rect x="130" y="74" width="1128.5" height="129.5"/></clipPath><clipPath id="c1"><rect x="130" y="205.5" width="1128.5" height="63.5"/></clipPath><clipPath id="c2"><rect x="130" y="271.5" width="1128.5" height="62.5"/></clipPath><clipPath id="c3"><rect x="130" y="337" width="1128.5" height="62"/></clipPath><clipPath id="call"><rect x="130" y="74" width="1128.5" height="325"/></clipPath><g clip-path="url(#call)"><path d="M169.6 92.3 L206.39999999999998 129.1 L201.6 133.9 L192.6 124.9 V161.7 L184.9 168.7 V143.7 H154.29999999999998 V168.7 L146.6 161.7 V124.9 L137.6 133.9 L132.8 129.1 Z M169.6 102.2 L154.29999999999998 117.5 V137.4 H184.9 V117.5 Z" fill="url(#lg)" fill-rule="evenodd"/><path d="M169.6 105.1 L173.4 108.9 V178.3 L169.6 183.89999999999998 L165.79999999999998 178.3 V108.9 Z" fill="url(#lg)"/><text x="171.1" y="204.5" text-anchor="middle" font-family="Liberation Sans" font-size="17" letter-spacing="2.05" fill="#4c4c4e" stroke="#4c4c4e" stroke-width="0.75">YOFOREX</text><path d="M524.7 82.2 L561.5 119.0 L556.7 123.80000000000001 L547.7 114.80000000000001 V151.60000000000002 L540.0 158.60000000000002 V133.6 H509.40000000000003 V158.60000000000002 L501.70000000000005 151.60000000000002 V114.80000000000001 L492.70000000000005 123.80000000000001 L487.90000000000003 119.0 Z M524.7 92.10000000000001 L509.40000000000003 107.4 V127.30000000000001 H540.0 V107.4 Z" fill="url(#lg)" fill-rule="evenodd"/><path d="M524.7 95.0 L528.5 98.80000000000001 V168.2 L524.7 173.8 L520.9000000000001 168.2 V98.80000000000001 Z" fill="url(#lg)"/><text x="526.2" y="194.4" text-anchor="middle" font-family="Liberation Sans" font-size="17" letter-spacing="2.05" fill="#4c4c4e" stroke="#4c4c4e" stroke-width="0.75">YOFOREX</text><path d="M850.5 81.2 L887.3 118.0 L882.5 122.80000000000001 L873.5 113.80000000000001 V150.60000000000002 L865.8 157.60000000000002 V132.6 H835.2 V157.60000000000002 L827.5 150.60000000000002 V113.80000000000001 L818.5 122.80000000000001 L813.7 118.0 Z M850.5 91.10000000000001 L835.2 106.4 V126.30000000000001 H865.8 V106.4 Z" fill="url(#lg)" fill-rule="evenodd"/><path d="M850.5 94.0 L854.3 97.80000000000001 V167.2 L850.5 172.8 L846.7 167.2 V97.80000000000001 Z" fill="url(#lg)"/><text x="852.0" y="193.4" text-anchor="middle" font-family="Liberation Sans" font-size="17" letter-spacing="2.05" fill="#4c4c4e" stroke="#4c4c4e" stroke-width="0.75">YOFOREX</text><path d="M1175.3 109.2 L1212.1 146.0 L1207.3 150.8 L1198.3 141.8 V178.60000000000002 L1190.6 185.60000000000002 V160.6 H1160.0 V185.60000000000002 L1152.3 178.60000000000002 V141.8 L1143.3 150.8 L1138.5 146.0 Z M1175.3 119.10000000000001 L1160.0 134.4 V154.3 H1190.6 V134.4 Z" fill="url(#lg)" fill-rule="evenodd"/><path d="M1175.3 122.0 L1179.1 125.80000000000001 V195.2 L1175.3 200.8 L1171.5 195.2 V125.80000000000001 Z" fill="url(#lg)"/><text x="1176.8" y="221.4" text-anchor="middle" font-family="Liberation Sans" font-size="17" letter-spacing="2.05" fill="#4c4c4e" stroke="#4c4c4e" stroke-width="0.75">YOFOREX</text><path d="M275.7 276.5 L312.5 313.3 L307.7 318.1 L298.7 309.1 V345.9 L291.0 352.9 V327.9 H260.4 V352.9 L252.7 345.9 V309.1 L243.7 318.1 L238.89999999999998 313.3 Z M275.7 286.4 L260.4 301.7 V321.6 H291.0 V301.7 Z" fill="url(#lg)" fill-rule="evenodd"/><path d="M275.7 289.3 L279.5 293.1 V362.5 L275.7 368.1 L271.9 362.5 V293.1 Z" fill="url(#lg)"/><text x="277.2" y="388.7" text-anchor="middle" font-family="Liberation Sans" font-size="17" letter-spacing="2.05" fill="#4c4c4e" stroke="#4c4c4e" stroke-width="0.75">YOFOREX</text><path d="M746 276.8 L782.8 313.6 L778 318.40000000000003 L769 309.40000000000003 V346.20000000000005 L761.3 353.20000000000005 V328.2 H730.7 V353.20000000000005 L723 346.20000000000005 V309.40000000000003 L714 318.40000000000003 L709.2 313.6 Z M746 286.7 L730.7 302.0 V321.90000000000003 H761.3 V302.0 Z" fill="url(#lg)" fill-rule="evenodd"/><path d="M746 289.6 L749.8 293.40000000000003 V362.8 L746 368.4 L742.2 362.8 V293.40000000000003 Z" fill="url(#lg)"/><text x="747.5" y="389.0" text-anchor="middle" font-family="Liberation Sans" font-size="17" letter-spacing="2.05" fill="#4c4c4e" stroke="#4c4c4e" stroke-width="0.75">YOFOREX</text><path d="M1062.5 246.6 L1099.3 283.4 L1094.5 288.2 L1085.5 279.2 V316.0 L1077.8 323.0 V298.0 H1047.2 V323.0 L1039.5 316.0 V279.2 L1030.5 288.2 L1025.7 283.4 Z M1062.5 256.5 L1047.2 271.8 V291.7 H1077.8 V271.8 Z" fill="url(#lg)" fill-rule="evenodd"/><path d="M1062.5 259.4 L1066.3 263.2 V332.6 L1062.5 338.2 L1058.7 332.6 V263.2 Z" fill="url(#lg)"/><text x="1064.0" y="358.8" text-anchor="middle" font-family="Liberation Sans" font-size="17" letter-spacing="2.05" fill="#4c4c4e" stroke="#4c4c4e" stroke-width="0.75">YOFOREX</text></g><rect x="129" y="203.3" width="1130" height="2" fill="#b4b4b4"/><rect x="129" y="269.2" width="1130" height="2" fill="#b4b4b4"/><rect x="129" y="334" width="1130" height="1.3" fill="#707070"/><rect x="129" y="335.5" width="1130" height="1.3" fill="#c8c8c8"/><path d="M151.0 74V203.3 M151.0 205.3V269.2 M151.0 271.2V334 M151.0 336.8V399 M172.5 74V203.3 M172.5 205.3V269.2 M172.5 271.2V334 M172.5 336.8V399 M194.0 74V203.3 M194.0 205.3V269.2 M194.0 271.2V334 M194.0 336.8V399 M215.5 74V203.3 M215.5 205.3V269.2 M215.5 271.2V334 M215.5 336.8V399 M237.0 74V203.3 M237.0 205.3V269.2 M237.0 271.2V334 M237.0 336.8V399 M258.5 74V203.3 M258.5 205.3V269.2 M258.5 271.2V334 M258.5 336.8V399 M280.0 74V203.3 M280.0 205.3V269.2 M280.0 271.2V334 M280.0 336.8V399 M301.5 74V203.3 M301.5 205.3V269.2 M301.5 271.2V334 M301.5 336.8V399 M323.0 74V203.3 M323.0 205.3V269.2 M323.0 271.2V334 M323.0 336.8V399 M344.5 74V203.3 M344.5 205.3V269.2 M344.5 271.2V334 M344.5 336.8V399 M366.0 74V203.3 M366.0 205.3V269.2 M366.0 271.2V334 M366.0 336.8V399 M387.5 74V203.3 M387.5 205.3V269.2 M387.5 271.2V334 M387.5 336.8V399 M409.0 74V203.3 M409.0 205.3V269.2 M409.0 271.2V334 M409.0 336.8V399 M430.5 74V203.3 M430.5 205.3V269.2 M430.5 271.2V334 M430.5 336.8V399 M452.0 74V203.3 M452.0 205.3V269.2 M452.0 271.2V334 M452.0 336.8V399 M473.5 74V203.3 M473.5 205.3V269.2 M473.5 271.2V334 M473.5 336.8V399 M495.0 74V203.3 M495.0 205.3V269.2 M495.0 271.2V334 M495.0 336.8V399 M516.5 74V203.3 M516.5 205.3V269.2 M516.5 271.2V334 M516.5 336.8V399 M538.0 74V203.3 M538.0 205.3V269.2 M538.0 271.2V334 M538.0 336.8V399 M559.5 74V203.3 M559.5 205.3V269.2 M559.5 271.2V334 M559.5 336.8V399 M581.0 74V203.3 M581.0 205.3V269.2 M581.0 271.2V334 M581.0 336.8V399 M602.5 74V203.3 M602.5 205.3V269.2 M602.5 271.2V334 M602.5 336.8V399 M624.0 74V203.3 M624.0 205.3V269.2 M624.0 271.2V334 M624.0 336.8V399 M645.5 74V203.3 M645.5 205.3V269.2 M645.5 271.2V334 M645.5 336.8V399 M667.0 74V203.3 M667.0 205.3V269.2 M667.0 271.2V334 M667.0 336.8V399 M688.5 74V203.3 M688.5 205.3V269.2 M688.5 271.2V334 M688.5 336.8V399 M710.0 74V203.3 M710.0 205.3V269.2 M710.0 271.2V334 M710.0 336.8V399 M731.5 74V203.3 M731.5 205.3V269.2 M731.5 271.2V334 M731.5 336.8V399 M753.0 74V203.3 M753.0 205.3V269.2 M753.0 271.2V334 M753.0 336.8V399 M774.5 74V203.3 M774.5 205.3V269.2 M774.5 271.2V334 M774.5 336.8V399 M796.0 74V203.3 M796.0 205.3V269.2 M796.0 271.2V334 M796.0 336.8V399 M817.5 74V203.3 M817.5 205.3V269.2 M817.5 271.2V334 M817.5 336.8V399 M839.0 74V203.3 M839.0 205.3V269.2 M839.0 271.2V334 M839.0 336.8V399 M860.5 74V203.3 M860.5 205.3V269.2 M860.5 271.2V334 M860.5 336.8V399 M882.0 74V203.3 M882.0 205.3V269.2 M882.0 271.2V334 M882.0 336.8V399 M903.5 74V203.3 M903.5 205.3V269.2 M903.5 271.2V334 M903.5 336.8V399 M925.0 74V203.3 M925.0 205.3V269.2 M925.0 271.2V334 M925.0 336.8V399 M946.5 74V203.3 M946.5 205.3V269.2 M946.5 271.2V334 M946.5 336.8V399 M968.0 74V203.3 M968.0 205.3V269.2 M968.0 271.2V334 M968.0 336.8V399 M989.5 74V203.3 M989.5 205.3V269.2 M989.5 271.2V334 M989.5 336.8V399 M1011.0 74V203.3 M1011.0 205.3V269.2 M1011.0 271.2V334 M1011.0 336.8V399 M1032.5 74V203.3 M1032.5 205.3V269.2 M1032.5 271.2V334 M1032.5 336.8V399 M1054.0 74V203.3 M1054.0 205.3V269.2 M1054.0 271.2V334 M1054.0 336.8V399 M1075.5 74V203.3 M1075.5 205.3V269.2 M1075.5 271.2V334 M1075.5 336.8V399 M1097.0 74V203.3 M1097.0 205.3V269.2 M1097.0 271.2V334 M1097.0 336.8V399 M1118.5 74V203.3 M1118.5 205.3V269.2 M1118.5 271.2V334 M1118.5 336.8V399 M1140.0 74V203.3 M1140.0 205.3V269.2 M1140.0 271.2V334 M1140.0 336.8V399 M1161.5 74V203.3 M1161.5 205.3V269.2 M1161.5 271.2V334 M1161.5 336.8V399 M1183.0 74V203.3 M1183.0 205.3V269.2 M1183.0 271.2V334 M1183.0 336.8V399 M1204.5 74V203.3 M1204.5 205.3V269.2 M1204.5 271.2V334 M1204.5 336.8V399 M1226.0 74V203.3 M1226.0 205.3V269.2 M1226.0 271.2V334 M1226.0 336.8V399 M1247.5 74V203.3 M1247.5 205.3V269.2 M1247.5 271.2V334 M1247.5 336.8V399" stroke="#97a3b0" stroke-width="1" stroke-dasharray="1.6 2.4" fill="none" opacity="0.8"/><path d="M130 86.1H1258.5 M130 109.1H1258.5 M130 132.2H1258.5 M130 155.2H1258.5 M130 178.2H1258.5 M130 201.3H1258.5 M130 352.2H1258.5 M130 367.8H1258.5 M130 383.4H1258.5" stroke="#97a3b0" stroke-width="1" stroke-dasharray="2 2.2" fill="none" opacity="0.8"/><path d="M130 88.9H1258.5" stroke="#6d7783" stroke-width="1.2"/><g clip-path="url(#cm)"><path d="M130.0 116.0V131.0M128.0 123.5H130.0M130.0 131.0H132.0M135.0 129.0V138.0M133.0 131.0H135.0M135.0 129.0H137.0M140.0 114.0V131.0M138.0 129.0H140.0M140.0 117.5H142.0M145.5 114.0V121.0M143.5 117.5H145.5M145.5 116.2H147.5M150.5 113.5V119.0M148.5 116.2H150.5M150.5 113.5H152.5M156.6 101.5V114.5M154.6 113.5H156.6M156.6 104.8H158.6M161.8 101.5V108.0M159.8 104.8H161.8M161.8 108.0H163.8M166.8 103.0V113.6M164.8 108.0H166.8M166.8 104.0H168.8M172.3 99.0V109.0M170.3 104.0H172.3M172.3 105.8H174.3M177.9 97.0V114.5M175.9 105.8H177.9M177.9 97.0H179.9M183.4 81.0V97.0M181.4 97.0H183.4M183.4 97.0H185.4M188.0 93.0V102.5M186.0 97.0H188.0M188.0 102.5H190.0M193.6 98.0V108.0M191.6 102.5H193.6M193.6 98.0H195.6M199.0 91.0V102.5M197.0 98.0H199.0M199.0 99.0H201.0M203.7 94.0V104.0M201.7 99.0H203.7M203.7 100.2H205.7M209.0 98.0V102.5M207.0 100.2H209.0M209.0 98.2H211.0M214.8 94.0V102.5M212.8 98.2H214.8M214.8 100.5H216.8M220.0 94.0V107.0M218.0 100.5H220.0M220.0 96.2H222.0M226.0 91.0V101.5M224.0 96.2H226.0M226.0 97.5H228.0M231.4 95.0V100.0M229.4 97.5H231.4M231.4 100.0H233.4M237.0 98.0V102.5M235.0 100.0H237.0M237.0 102.5H239.0M242.5 96.0V109.0M240.5 102.5H242.5M242.5 101.5H244.5M248.0 95.0V108.0M246.0 101.5H248.0M248.0 102.0H250.0M253.6 97.0V107.0M251.6 102.0H253.6M253.6 97.0H255.6M259.0 91.0V98.0M257.0 97.0H259.0M259.0 92.5H261.0M264.7 88.0V97.0M262.7 92.5H264.7M264.7 95.0H266.7M269.3 89.5V100.6M267.3 95.0H269.3M269.3 100.6H271.3M274.8 99.0V108.0M272.8 100.6H274.8M274.8 108.0H276.8M280.4 105.0V116.0M278.4 108.0H280.4M280.4 111.2H282.4M286.0 107.0V115.4M284.0 111.2H286.0M286.0 113.0H288.0M290.5 108.0V118.0M288.5 113.0H290.5M290.5 115.0H292.5M296.0 109.0V121.0M294.0 115.0H296.0M296.0 113.0H298.0M301.6 110.0V116.0M299.6 113.0H301.6M301.6 110.0H303.6M307.0 102.5V113.6M305.0 110.0H307.0M307.0 102.5H309.0M312.7 93.0V104.0M310.7 102.5H312.7M312.7 97.2H314.7M318.0 93.0V101.5M316.0 97.2H318.0M318.0 98.2H320.0M323.8 94.0V102.5M321.8 98.2H323.8M323.8 94.0H325.8M329.3 89.5V98.0M327.3 94.0H329.3M329.3 98.0H331.3M334.0 89.5V107.0M332.0 98.0H334.0M334.0 107.0H336.0M339.5 102.5V115.4M337.5 107.0H339.5M339.5 105.2H341.5M344.6 102.5V108.0M342.6 105.2H344.6M344.6 108.0H346.6M349.2 102.5V116.0M347.2 108.0H349.2M349.2 116.0H351.2M355.7 113.6V121.0M353.7 116.0H355.7M355.7 116.8H357.7M360.3 114.5V119.0M358.3 116.8H360.3M360.3 119.0H362.3M365.9 117.0V125.6M363.9 119.0H365.9M365.9 121.8H367.9M371.4 118.0V125.6M369.4 121.8H371.4M371.4 125.6H373.4M377.0 124.6V127.4M375.0 125.6H377.0M377.0 124.6H379.0M382.5 116.0V129.0M380.5 124.6H382.5M382.5 116.0H384.5M388.0 107.0V121.0M386.0 116.0H388.0M388.0 117.2H390.0M393.6 111.7V122.8M391.6 117.2H393.6M393.6 114.0H395.6M399.0 109.0V119.0M397.0 114.0H399.0M399.0 110.7H401.0M403.7 106.0V115.4M401.7 110.7H403.7M403.7 109.8H405.7M409.3 106.0V113.6M407.3 109.8H409.3M409.3 113.6H411.3M414.8 111.0V126.5M412.8 113.6H414.8M414.8 126.5H416.8M420.3 125.6V148.7M418.3 126.5H420.3M420.3 148.7H422.3M425.9 145.0V160.7M423.9 148.7H425.9M425.9 145.0H427.9M430.5 132.0V146.8M428.5 145.0H430.5M430.5 132.0H432.5M436.0 122.0V131.0M434.0 131.0H436.0M436.0 126.0H438.0M441.6 121.0V131.0M439.6 126.0H441.6M441.6 131.0H443.6M447.0 129.0V143.0M445.0 131.0H447.0M447.0 143.0H449.0M452.7 136.6V162.5M450.7 143.0H452.7M452.7 161.5H454.7M458.2 153.0V170.0M456.2 161.5H458.2M458.2 165.2H460.2M463.7 158.8V171.7M461.7 165.2H463.7M463.7 159.2H465.7M468.4 150.5V168.0M466.4 159.2H468.4M468.4 156.8H470.4M474.0 153.0V160.7M472.0 156.8H474.0M474.0 160.7H476.0M479.4 157.0V169.0M477.4 160.7H479.4M479.4 157.4H481.4M485.0 146.8V168.0M483.0 157.4H485.0M485.0 162.0H487.0M489.6 156.0V168.0M487.6 162.0H489.6M489.6 164.2H491.6M495.2 162.5V166.0M493.2 164.2H495.2M495.2 164.3H497.2M500.7 160.7V168.0M498.7 164.3H500.7M500.7 168.0H502.7M506.2 160.7V183.0M504.2 168.0H506.2M506.2 179.1H508.2M511.8 172.7V185.6M509.8 179.1H511.8M511.8 177.8H513.8M517.3 174.5V181.0M515.3 177.8H517.3M517.3 174.5H519.3M522.9 168.0V181.0M520.9 174.5H522.9M522.9 172.5H524.9M527.5 167.0V178.0M525.5 172.5H527.5M527.5 175.5H529.5M533.0 170.0V181.0M531.0 175.5H533.0M533.0 175.5H535.0M538.6 170.0V181.0M536.6 175.5H538.6M538.6 174.0H540.6M544.0 170.0V178.0M542.0 174.0H544.0M544.0 175.0H546.0M549.6 169.0V181.0M547.6 175.0H549.6M549.6 181.0H551.6M554.6 172.7V194.0M552.6 181.0H554.6M554.6 187.4H556.6M559.2 175.4V199.5M557.2 187.4H559.2M559.2 175.4H561.2M564.8 168.0V175.4M562.8 175.4H564.8M564.8 168.0H566.8M570.0 156.0V172.7M568.0 168.0H570.0M570.0 159.5H572.0M575.5 155.0V164.0M573.5 159.5H575.5M575.5 159.5H577.5M580.5 153.0V166.0M578.5 159.5H580.5M580.5 163.8H582.5M586.0 160.7V167.0M584.0 163.8H586.0M586.0 160.7H588.0M591.6 156.0V165.0M589.6 160.7H591.6M591.6 165.0H593.6M597.0 159.7V172.7M595.0 165.0H597.0M597.0 172.7H599.0M602.6 166.0V180.0M600.6 172.7H602.6M602.6 170.3H604.6M608.2 156.0V184.7M606.2 170.3H608.2M608.2 156.0H610.2M613.7 147.7V160.7M611.7 156.0H613.7M613.7 147.7H615.7M619.3 134.8V151.4M617.3 147.7H619.3M619.3 140.8H621.3M623.9 134.8V146.8M621.9 140.8H623.9M623.9 142.6H625.9M629.4 135.7V149.6M627.4 142.6H629.4M629.4 138.4H631.4M635.0 134.8V142.0M633.0 138.4H635.0M635.0 142.0H637.0M640.5 136.6V150.5M638.5 142.0H640.5M640.5 150.5H642.5M645.7 145.0V158.0M643.7 150.5H645.7M645.7 145.0H647.7M651.2 137.6V146.0M649.2 145.0H651.2M651.2 138.0H653.2M656.8 133.0V143.0M654.8 138.0H656.8M656.8 143.0H658.8M662.3 136.6V149.6M660.3 143.0H662.3M662.3 138.5H664.3M667.3 133.0V144.0M665.3 138.5H667.3M667.3 137.5H669.3M672.8 133.0V142.0M670.8 137.5H672.8M672.8 136.0H674.8M678.4 130.0V142.0M676.4 136.0H678.4M678.4 139.5H680.4M683.0 133.0V146.0M681.0 139.5H683.0M683.0 142.1H685.0M688.5 136.6V147.7M686.5 142.1H688.5M688.5 136.6H690.5M694.0 120.0V144.0M692.0 136.6H694.0M694.0 120.0H696.0M699.6 107.0V133.0M697.6 120.0H699.6M699.6 107.0H701.6M705.0 98.8V111.7M703.0 107.0H705.0M705.0 109.3H707.0M710.7 100.6V118.0M708.7 109.3H710.7M710.7 118.0H712.7M716.0 112.6V124.6M714.0 118.0H716.0M716.0 124.6H718.0M720.8 119.0V131.0M718.8 124.6H720.8M720.8 126.5H722.8M726.4 122.0V131.0M724.4 126.5H726.4M726.4 122.0H728.4M732.0 117.0V123.7M730.0 122.0H732.0M732.0 117.0H734.0M737.5 104.0V118.0M735.5 117.0H737.5M737.5 114.3H739.5M743.0 111.7V117.0M741.0 114.3H743.0M743.0 117.0H745.0M748.6 114.5V123.7M746.6 117.0H748.6M748.6 119.4H750.6M753.2 116.0V122.8M751.2 119.4H753.2M753.2 120.8H755.2M758.7 117.0V124.6M756.7 120.8H758.7M758.7 124.6H760.7M764.0 118.0V135.7M762.0 124.6H764.0M764.0 132.9H766.0M768.9 127.4V138.5M766.9 132.9H768.9M768.9 130.7H770.9M774.4 128.3V133.0M772.4 130.7H774.4M774.4 133.0H776.4M780.0 130.0V137.6M778.0 133.0H780.0M780.0 134.3H782.0M785.0 128.3V140.3M783.0 134.3H785.0M785.0 138.4H787.0M790.5 133.9V143.0M788.5 138.4H790.5M790.5 133.9H792.5M796.0 122.8V136.6M794.0 133.9H796.0M796.0 122.8H798.0M801.6 118.0V125.6M799.6 122.8H801.6M801.6 125.2H803.6M807.0 122.0V128.3M805.0 125.2H807.0M807.0 128.3H809.0M812.6 124.6V133.0M810.6 128.3H812.6M812.6 124.6H814.6M817.3 112.6V126.5M815.3 124.6H817.3M817.3 115.3H819.3M822.8 112.6V118.0M820.8 115.3H822.8M822.8 117.3H824.8M828.3 110.0V124.6M826.3 117.3H828.3M828.3 122.5H830.3M833.9 116.0V129.0M831.9 122.5H833.9M833.9 121.8H835.9M839.4 117.0V126.5M837.4 121.8H839.4M839.4 121.7H841.4M845.0 116.0V127.4M843.0 121.7H845.0M845.0 119.8H847.0M850.5 116.0V123.7M848.5 119.8H850.5M850.5 116.8H852.5M856.0 113.6V120.0M854.0 116.8H856.0M856.0 114.4H858.0M861.6 110.8V118.0M859.6 114.4H861.6M861.6 114.9H863.6M866.2 110.8V119.0M864.2 114.9H866.2M866.2 117.7H868.2M871.7 115.4V120.0M869.7 117.7H871.7M871.7 120.0H873.7M877.3 115.4V124.6M875.3 120.0H877.3M877.3 115.4H879.3M882.8 112.6V118.0M880.8 115.4H882.8M882.8 112.6H884.8M887.4 106.0V115.4M885.4 112.6H887.4M887.4 106.0H889.4M893.0 100.6V109.9M891.0 106.0H893.0M893.0 106.6H895.0M898.5 100.6V112.6M896.5 106.6H898.5M898.5 106.7H900.5M904.0 104.3V109.0M902.0 106.7H904.0M904.0 108.3H906.0M909.2 105.0V111.7M907.2 108.3H909.2M909.2 105.2H911.2M914.8 102.5V108.0M912.8 105.2H914.8M914.8 103.8H916.8M919.8 100.6V107.0M917.8 103.8H919.8M919.8 100.7H921.8M925.3 98.8V102.5M923.3 100.7H925.3M925.3 99.2H927.3M930.9 97.0V101.5M928.9 99.2H930.9M930.9 99.7H932.9M936.4 97.9V101.5M934.4 99.7H936.4M936.4 99.7H938.4M942.0 97.9V101.5M940.0 99.7H942.0M942.0 101.5H944.0M947.5 97.0V107.0M945.5 101.5H947.5M947.5 105.8H949.5M952.0 102.5V109.0M950.0 105.8H952.0M952.0 109.0H954.0M957.6 106.0V115.4M955.6 109.0H957.6M957.6 108.7H959.6M962.8 103.4V114.0M960.8 108.7H962.8M962.8 104.0H964.8M968.2 101.0V107.0M966.2 104.0H968.2M968.2 102.3H970.2M973.5 98.7V106.0M971.5 102.3H973.5M973.5 101.8H975.5M979.0 95.5V108.0M977.0 101.8H979.0M979.0 102.5H981.0M984.7 96.9V108.0M982.7 102.5H984.7M984.7 100.1H986.7M989.8 97.8V102.4M987.8 100.1H989.8M989.8 102.4H991.8M995.2 97.8V107.0M993.2 102.4H995.2M995.2 104.0H997.2M1000.5 101.5V106.6M998.5 104.0H1000.5M1000.5 101.5H1002.5M1005.6 96.9V104.8M1003.6 101.5H1005.6M1005.6 96.9H1007.6M1011.2 94.0V99.2M1009.2 96.9H1011.2M1011.2 94.0H1013.2M1016.3 84.8V97.8M1014.3 94.0H1016.3M1016.3 89.7H1018.3M1021.9 81.5V97.8M1019.9 89.7H1021.9M1021.9 89.5H1023.9" stroke="#18cc18" stroke-width="1.05" fill="none"/></g><path d="M129.8 266.1 L142.0 262.6 L149.0 262.6 L173.7 258.0 L191.3 253.8 L215.9 250.3 L233.5 248.2 L254.6 245.0 L279.2 241.1 L303.8 239.4 L324.9 236.6 L346.0 234.1 L356.6 233.0 L367.1 234.1 L388.2 236.2 L398.8 238.0 L409.3 239.0 L423.4 235.2 L437.4 233.8 L448.0 234.5 L465.6 231.6 L483.1 230.2 L497.2 229.2 L507.7 226.4 L518.3 226.7 L528.9 224.6 L550.0 223.9 L560.5 220.0 L570.0 218.7 L580.8 219.4 L602.3 218.0 L613.1 215.1 L627.5 213.3 L645.5 210.8 L656.2 211.9 L677.8 210.8 L688.6 212.6 L710.1 207.5 L724.5 210.8 L735.3 212.9 L749.7 213.7 L758.6 216.5 L767.6 214.0 L778.4 216.9 L796.4 218.7 L817.9 220.8 L828.7 224.4 L843.1 225.2 L868.2 228.0 L882.6 234.1 L893.4 235.2 L915.0 238.4 L929.3 240.2 L943.7 243.1 L958.1 246.0 L968.9 250.3 L986.8 252.8 L994.0 252.8 L1008.4 254.6 L1021.0 252.5" stroke="#1f9f9a" stroke-width="1.0" fill="none" clip-path="url(#c1)"/><path d="M128.0 302.9 L135.0 300.5 L149.1 300.5 L163.2 294.8 L173.7 294.1 L184.3 291.7 L194.8 294.1 L205.4 299.4 L215.9 305.7 L226.5 302.6 L237.0 307.5 L247.5 307.5 L261.6 314.2 L275.7 312.4 L293.3 310.0 L303.8 311.7 L314.4 308.2 L328.4 310.3 L339.0 305.7 L349.5 306.8 L367.1 309.6 L377.6 312.1 L388.2 310.0 L398.7 307.5 L409.3 310.7 L419.8 301.2 L430.4 297.6 L437.4 294.8 L446.2 292.4 L453.2 281.8 L465.6 280.8 L472.6 280.1 L479.6 280.1 L486.6 275.8 L493.7 280.1 L500.7 287.8 L511.3 284.3 L525.3 282.9 L535.9 291.3 L546.4 293.4 L557.0 286.4 L564.0 287.1 L571.0 280.8 L575.4 279.7 L584.4 285.8 L598.7 287.6 L605.9 284.0 L609.5 279.7 L623.9 275.3 L629.3 278.6 L634.7 286.8 L641.9 285.0 L656.2 289.0 L663.4 285.8 L677.8 286.8 L685.0 294.0 L690.4 294.7 L699.4 286.8 L704.7 285.8 L710.1 281.1 L724.5 282.2 L735.3 284.0 L749.7 287.6 L764.0 291.2 L771.2 300.1 L782.0 309.1 L792.8 312.7 L807.2 312.7 L814.3 315.2 L821.5 312.7 L832.3 309.8 L839.5 313.4 L853.9 313.4 L864.6 317.0 L871.8 320.6 L886.2 320.6 L897.0 319.2 L904.2 323.5 L918.5 327.8 L936.5 330.0 L941.9 331.4 L947.3 328.2 L961.7 327.8 L972.4 330.0 L983.2 323.5 L994.0 322.8 L1008.4 320.6 L1021.0 314.5" stroke="#1f9f9a" stroke-width="1.0" fill="none" clip-path="url(#c2)"/><path d="M128.0 348.1 L135.0 346.9 L139.7 348.1 L146.7 355.1 L153.8 364.5 L160.8 372.7 L169.0 377.4 L177.2 372.7 L186.6 366.8 L196.0 365.6 L205.3 373.8 L214.7 378.5 L224.1 375.0 L231.1 382.0 L242.8 369.2 L252.2 377.4 L261.6 379.7 L271.0 373.8 L280.3 363.3 L289.7 368.0 L296.7 366.8 L306.1 375.0 L315.5 380.9 L327.2 387.9 L334.2 376.2 L343.6 369.2 L353.0 365.6 L364.7 359.8 L371.7 357.4 L378.8 356.3 L385.8 365.6 L392.8 375.0 L402.2 379.7 L409.2 380.9 L416.3 368.0 L424.7 349.2 L431.7 359.8 L441.1 369.2 L452.8 347.6 L457.5 348.1 L464.5 355.1 L473.9 364.5 L480.9 356.3 L488.0 364.5 L499.7 373.8 L511.4 364.5 L523.1 377.4 L534.8 378.5 L546.6 384.4 L558.3 375.0 L567.6 385.6 L579.4 387.9 L591.1 384.4 L600.5 375.0 L612.2 382.0 L626.2 386.7 L635.6 387.9 L645.0 371.5 L654.4 377.4 L663.7 375.0 L677.8 384.4 L689.5 383.2 L705.9 390.2 L724.8 376.4 L734.5 382.4 L744.2 376.4 L766.0 370.3 L785.4 369.1 L797.5 380.0 L812.0 365.5 L826.6 374.0 L838.7 377.6 L850.8 384.9 L860.5 388.5 L875.0 381.2 L889.5 384.9 L906.5 381.2 L921.0 386.1 L939.2 394.5 L952.5 372.8 L962.2 375.2 L974.3 382.4 L991.3 387.3 L1005.8 388.5 L1020.3 393.3" stroke="#d8c49a" stroke-width="1.0" fill="none" stroke-dasharray="1.8 1.8" clip-path="url(#c3)"/><path d="M128.0 390.2 L132.7 393.8 L139.7 378.5 L144.4 380.9 L151.4 383.2 L156.1 372.7 L165.5 376.2 L174.9 372.7 L181.9 364.5 L188.9 370.3 L198.3 364.5 L207.7 372.7 L217.1 378.5 L226.4 384.4 L235.8 392.6 L245.2 384.4 L254.6 380.9 L263.9 369.2 L273.3 373.8 L282.7 379.7 L292.0 387.9 L301.4 392.6 L308.5 372.7 L315.5 369.2 L324.9 376.2 L331.9 372.7 L343.6 376.2 L355.3 382.0 L364.7 386.7 L374.1 391.4 L381.1 380.9 L385.8 372.7 L392.8 376.2 L399.9 378.5 L409.2 380.9 L416.3 383.2 L427.0 386.7 L434.1 361.0 L441.1 364.5 L450.5 375.0 L462.2 383.2 L471.6 377.4 L478.6 383.2 L485.6 376.2 L495.0 383.2 L504.4 382.0 L516.1 390.2 L530.1 387.9 L541.9 390.2 L559.4 396.1 L570.0 376.2 L581.7 379.7 L591.1 384.4 L602.8 382.0 L619.2 364.5 L628.6 372.7 L640.3 372.7 L652.0 366.8 L659.0 365.6 L668.4 369.2 L677.8 373.8 L687.2 380.9 L696.5 371.5 L704.7 361.0 L712.9 372.7 L724.8 370.3 L737.0 357.7 L749.1 367.9 L761.2 381.2 L775.7 388.5 L790.2 393.3 L797.5 374.0 L804.8 370.3 L816.9 363.1 L829.0 370.3 L841.1 378.8 L850.8 386.1 L860.5 372.8 L872.6 381.2 L882.3 374.0 L893.2 357.0 L906.5 374.0 L916.2 366.7 L930.7 367.9 L945.2 376.4 L954.9 384.9 L964.6 382.4 L974.3 376.4 L986.4 381.2 L998.5 387.3 L1010.6 380.0 L1019.1 364.3" stroke="#8cc03a" stroke-width="1.0" fill="none" stroke-dasharray="1.8 1.8" clip-path="url(#c3)"/><path d="M128.0 358.6 L135.0 352.3 L144.4 352.3 L151.4 354.6 L158.5 363.3 L165.5 368.7 L174.9 374.3 L184.2 376.9 L196.0 382.0 L207.7 386.7 L217.1 390.2 L226.4 392.1 L235.8 392.6 L242.8 388.4 L254.6 386.7 L266.3 383.9 L275.6 383.2 L287.4 377.4 L299.1 370.3 L306.1 373.4 L317.8 374.3 L327.2 374.3 L336.6 377.4 L348.3 380.9 L360.0 376.7 L367.0 371.5 L378.8 361.0 L383.4 361.7 L390.5 366.8 L399.9 373.8 L409.2 379.0 L413.9 377.4 L420.0 374.3 L424.7 368.7 L430.5 369.2 L436.4 373.8 L445.8 377.4 L452.8 375.7 L462.2 370.3 L473.9 370.3 L478.6 368.0 L488.0 370.3 L495.0 371.5 L500.9 375.0 L516.1 368.7 L525.5 373.8 L534.8 376.2 L547.7 376.2 L559.4 368.0 L570.0 372.7 L581.7 375.7 L588.7 378.5 L598.1 380.9 L614.5 383.2 L623.9 377.4 L633.3 375.7 L640.3 379.7 L652.0 382.0 L666.1 382.7 L677.8 382.0 L691.9 386.0 L701.2 380.9 L708.3 373.8 L729.7 380.5 L743.0 374.7 L763.6 382.0 L778.1 376.4 L791.4 366.0 L804.8 372.8 L816.9 377.1 L833.8 383.6 L850.8 389.7 L865.3 384.4 L877.4 386.1 L887.1 383.6 L899.2 375.2 L908.9 374.0 L928.3 366.7 L940.4 358.2 L952.5 366.7 L959.8 367.9 L969.5 375.2 L986.4 376.4 L1003.4 381.2 L1010.6 377.6 L1020.3 367.4" stroke="#1f9f9a" stroke-width="1.05" fill="none" clip-path="url(#c3)"/><path d="M1028.5 74 L1035 74 L1031.7 77.5z" fill="#8a96a3"/><g fill="none" stroke="#d4d4d4" stroke-width="1"><rect x="129.5" y="73.5" width="1129" height="130.2"/><rect x="129.5" y="205" width="1129" height="64.5"/><rect x="129.5" y="270.8" width="1129" height="63.5"/><rect x="129.5" y="336" width="1129" height="63.2"/></g><rect x="129" y="73" width="1" height="327" fill="#747474"/><path d="M1259 109.1h2.5 M1259 132.2h2.5 M1259 155.2h2.5 M1259 178.2h2.5 M1259 201.3h2.5 M1259 352.2h2.5 M1259 367.8h2.5 M1259 383.4h2.5" stroke="#ccc" stroke-width="1"/><path d="M129.5 399v3 M172.5 399v3 M215.6 399v3 M258.6 399v3 M301.6 399v3 M344.6 399v3 M387.7 399v3 M430.7 399v3 M473.7 399v3 M516.8 399v3 M559.8 399v3 M602.8 399v3 M645.9 399v3 M688.9 399v3 M731.9 399v3 M775.0 399v3 M818.0 399v3 M861.0 399v3 M904.0 399v3 M947.1 399v3 M990.1 399v3" stroke="#ccc" stroke-width="1"/></g></svg>
<div class="a" style="left:132.0px;top:76.2px;font-size:6.35px;color:#e8e8e8;">GBPUSD,M5&nbsp; 1.31442 1.31507 1.31433 1.31474</div>
<div class="a" style="left:132.7px;top:208.7px;font-size:6.35px;color:#e8e8e8;">ATR(50) 0.0004</div>
<div class="a" style="left:132.7px;top:274.7px;font-size:6.35px;color:#e8e8e8;">ATR(14) 0.0004</div>
<div class="a" style="left:132.7px;top:340.3px;font-size:6.35px;color:#e8e8e8;">ADX(14) 28.3191 +DI:28.7588 -DI:8.2304</div>
<div class="b" style="left:1259.5px;top:85.3px;width:21px;height:7.4px;background:#fff"></div>
<div class="a" style="left:1261.0px;top:86.4px;font-size:6.35px;color:#000;">1.3147</div>
<div class="a" style="left:1261.0px;top:106.6px;font-size:6.35px;color:#e8e8e8;">1.3138</div>
<div class="a" style="left:1261.0px;top:129.7px;font-size:6.35px;color:#e8e8e8;">1.3127</div>
<div class="a" style="left:1261.0px;top:152.7px;font-size:6.35px;color:#e8e8e8;">1.3117</div>
<div class="a" style="left:1261.0px;top:175.7px;font-size:6.35px;color:#e8e8e8;">1.3106</div>
<div class="a" style="left:1261.0px;top:198.5px;font-size:6.35px;color:#e8e8e8;">1.3096</div>
<div class="a" style="left:1261.0px;top:207.0px;font-size:6.35px;color:#e8e8e8;">0.0007</div>
<div class="a" style="left:1261.0px;top:262.0px;font-size:6.35px;color:#e8e8e8;">0.0003</div>
<div class="a" style="left:1261.0px;top:273.0px;font-size:6.35px;color:#e8e8e8;">0.0007</div>
<div class="a" style="left:1261.0px;top:328.0px;font-size:6.35px;color:#e8e8e8;">0.0003</div>
<div class="a" style="left:1261.0px;top:338.5px;font-size:6.35px;color:#e8e8e8;">48</div>
<div class="a" style="left:1261.0px;top:355.0px;font-size:6.35px;color:#e8e8e8;">37</div>
<div class="a" style="left:1261.0px;top:371.2px;font-size:6.35px;color:#e8e8e8;">26</div>
<div class="a" style="left:1261.0px;top:386.3px;font-size:6.35px;color:#e8e8e8;">15</div>
<div class="a" style="left:1261.0px;top:392.7px;font-size:6.35px;color:#e8e8e8;">5</div>
<div class="a" style="left:129.4px;top:403.1px;font-size:6.35px;color:#f0f0f0;">31 Oct 2025</div>
<div class="a" style="left:172.4px;top:403.1px;font-size:6.35px;color:#f0f0f0;">31 Oct 07:45</div>
<div class="a" style="left:215.5px;top:403.1px;font-size:6.35px;color:#f0f0f0;">31 Oct 08:25</div>
<div class="a" style="left:258.5px;top:403.1px;font-size:6.35px;color:#f0f0f0;">31 Oct 09:05</div>
<div class="a" style="left:301.5px;top:403.1px;font-size:6.35px;color:#f0f0f0;">31 Oct 09:45</div>
<div class="a" style="left:344.6px;top:403.1px;font-size:6.35px;color:#f0f0f0;">31 Oct 10:25</div>
<div class="a" style="left:387.6px;top:403.1px;font-size:6.35px;color:#f0f0f0;">31 Oct 11:05</div>
<div class="a" style="left:430.6px;top:403.1px;font-size:6.35px;color:#f0f0f0;">31 Oct 11:45</div>
<div class="a" style="left:473.6px;top:403.1px;font-size:6.35px;color:#f0f0f0;">31 Oct 12:25</div>
<div class="a" style="left:516.7px;top:403.1px;font-size:6.35px;color:#f0f0f0;">31 Oct 13:05</div>
<div class="a" style="left:559.7px;top:403.1px;font-size:6.35px;color:#f0f0f0;">31 Oct 13:45</div>
<div class="a" style="left:602.7px;top:403.1px;font-size:6.35px;color:#f0f0f0;">31 Oct 14:25</div>
<div class="a" style="left:645.8px;top:403.1px;font-size:6.35px;color:#f0f0f0;">31 Oct 15:05</div>
<div class="a" style="left:688.8px;top:403.1px;font-size:6.35px;color:#f0f0f0;">31 Oct 15:45</div>
<div class="a" style="left:731.8px;top:403.1px;font-size:6.35px;color:#f0f0f0;">31 Oct 16:25</div>
<div class="a" style="left:774.9px;top:403.1px;font-size:6.35px;color:#f0f0f0;">31 Oct 17:05</div>
<div class="a" style="left:817.9px;top:403.1px;font-size:6.35px;color:#f0f0f0;">31 Oct 17:45</div>
<div class="a" style="left:860.9px;top:403.1px;font-size:6.35px;color:#f0f0f0;">31 Oct 18:25</div>
<div class="a" style="left:903.9px;top:403.1px;font-size:6.35px;color:#f0f0f0;">31 Oct 19:05</div>
<div class="a" style="left:947.0px;top:403.1px;font-size:6.35px;color:#f0f0f0;">31 Oct 19:45</div>
<div class="a" style="left:990.0px;top:403.1px;font-size:6.35px;color:#f0f0f0;">31 Oct 20:25</div>
<div class="b" style="left:0px;top:413px;width:1280px;height:270px;background:#f0f0f0"></div>
<div class="b" style="left:0px;top:413px;width:1280px;height:1px;background:#dadada"></div>
<svg style="left:1px;top:416px" width="9" height="9"><path d="M2 2 L6 6 M6 2 L2 6" stroke="#222" stroke-width="1.1"/></svg>
<div class="b" style="left:1px;top:426px;width:9px;height:254px;background:#cddcec"></div>
<div class="a" style="left:-12px;top:666px;width:36px;text-align:center;font-size:7.6px;color:#2a2a2a;transform:rotate(-90deg)">Tester</div>
<div class="b" style="left:11px;top:416.5px;width:1269px;height:250px;background:#fff"></div>
<svg style="left:0;top:413px" width="1280" height="270"><g transform="translate(0,-413)"><path d="M52.8 421V654.5 M91.6 421V654.5 M130.4 421V654.5 M169.2 421V654.5 M208.0 421V654.5 M246.8 421V654.5 M285.6 421V654.5 M324.4 421V654.5 M363.2 421V654.5 M402.0 421V654.5 M440.8 421V654.5 M479.6 421V654.5 M518.4 421V654.5 M557.2 421V654.5 M596.0 421V654.5 M634.8 421V654.5 M673.6 421V654.5 M712.4 421V654.5 M751.2 421V654.5 M790.0 421V654.5 M828.8 421V654.5 M867.6 421V654.5 M906.4 421V654.5 M945.2 421V654.5 M984.0 421V654.5 M1022.8 421V654.5 M1061.6 421V654.5 M1100.4 421V654.5 M1139.2 421V654.5 M1178.0 421V654.5 M1216.8 421V654.5 M14.5 439.0H1257.5 M14.5 460.6H1257.5 M14.5 482.2H1257.5 M14.5 503.8H1257.5 M14.5 525.4H1257.5 M14.5 547.0H1257.5 M14.5 568.6H1257.5 M14.5 590.2H1257.5 M14.5 611.8H1257.5 M14.5 633.4H1257.5" stroke="#c4c4c4" stroke-width="1" stroke-dasharray="2 2.6" fill="none"/><rect x="14.5" y="420.5" width="1243.3" height="234.3" fill="none" stroke="#4a4a4a" stroke-width="1.2"/><path d="M14.8 644 L52.8 599.5 L92 441.9 L130.9 626.6" stroke="#1e1eb8" stroke-width="1.45" fill="none" stroke-linejoin="round"/><path d="M14.0 654.5v2 M52.8 654.5v2 M91.6 654.5v2 M130.4 654.5v2 M169.2 654.5v2 M208.0 654.5v2 M246.8 654.5v2 M285.6 654.5v2 M324.4 654.5v2 M363.2 654.5v2 M402.0 654.5v2 M440.8 654.5v2 M479.6 654.5v2 M518.4 654.5v2 M557.2 654.5v2 M596.0 654.5v2 M634.8 654.5v2 M673.6 654.5v2 M712.4 654.5v2 M751.2 654.5v2 M790.0 654.5v2 M828.8 654.5v2 M867.6 654.5v2 M906.4 654.5v2 M945.2 654.5v2 M984.0 654.5v2 M1022.8 654.5v2 M1061.6 654.5v2 M1100.4 654.5v2 M1139.2 654.5v2 M1178.0 654.5v2 M1216.8 654.5v2 M1257.8 439.0h2 M1257.8 460.6h2 M1257.8 482.2h2 M1257.8 503.8h2 M1257.8 525.4h2 M1257.8 547.0h2 M1257.8 568.6h2 M1257.8 590.2h2 M1257.8 611.8h2 M1257.8 633.4h2 M1257.8 655.0h2" stroke="#333" stroke-width="1"/><rect x="11" y="666" width="1269" height="1.3" fill="#3c3c3c"/></g></svg>
<div class="a" style="left:17.0px;top:423.1px;font-size:6.28px;color:#1a1a1a;">Balance / Every tick (the most precise method based on all available least timeframes to generate each tick)</div>
<div class="a" style="left:-83.8px;width:200px;text-align:center;top:656.7px;font-size:6.6px;color:#222;">0</div>
<div class="a" style="left:-246.6px;width:300px;text-align:right;top:656.7px;font-size:6.6px;color:#222;">1</div>
<div class="a" style="left:-207.8px;width:300px;text-align:right;top:656.7px;font-size:6.6px;color:#222;">2</div>
<div class="a" style="left:-169.0px;width:300px;text-align:right;top:656.7px;font-size:6.6px;color:#222;">3</div>
<div class="a" style="left:-130.2px;width:300px;text-align:right;top:656.7px;font-size:6.6px;color:#222;">4</div>
<div class="a" style="left:-91.4px;width:300px;text-align:right;top:656.7px;font-size:6.6px;color:#222;">5</div>
<div class="a" style="left:-52.6px;width:300px;text-align:right;top:656.7px;font-size:6.6px;color:#222;">6</div>
<div class="a" style="left:-13.8px;width:300px;text-align:right;top:656.7px;font-size:6.6px;color:#222;">7</div>
<div class="a" style="left:25.0px;width:300px;text-align:right;top:656.7px;font-size:6.6px;color:#222;">8</div>
<div class="a" style="left:63.8px;width:300px;text-align:right;top:656.7px;font-size:6.6px;color:#222;">9</div>
<div class="a" style="left:102.6px;width:300px;text-align:right;top:656.7px;font-size:6.6px;color:#222;">10</div>
<div class="a" style="left:141.4px;width:300px;text-align:right;top:656.7px;font-size:6.6px;color:#222;">11</div>
<div class="a" style="left:180.2px;width:300px;text-align:right;top:656.7px;font-size:6.6px;color:#222;">12</div>
<div class="a" style="left:219.0px;width:300px;text-align:right;top:656.7px;font-size:6.6px;color:#222;">13</div>
<div class="a" style="left:257.8px;width:300px;text-align:right;top:656.7px;font-size:6.6px;color:#222;">14</div>
<div class="a" style="left:296.6px;width:300px;text-align:right;top:656.7px;font-size:6.6px;color:#222;">15</div>
<div class="a" style="left:335.4px;width:300px;text-align:right;top:656.7px;font-size:6.6px;color:#222;">16</div>
<div class="a" style="left:374.2px;width:300px;text-align:right;top:656.7px;font-size:6.6px;color:#222;">17</div>
<div class="a" style="left:413.0px;width:300px;text-align:right;top:656.7px;font-size:6.6px;color:#222;">18</div>
<div class="a" style="left:451.8px;width:300px;text-align:right;top:656.7px;font-size:6.6px;color:#222;">19</div>
<div class="a" style="left:490.6px;width:300px;text-align:right;top:656.7px;font-size:6.6px;color:#222;">20</div>
<div class="a" style="left:529.4px;width:300px;text-align:right;top:656.7px;font-size:6.6px;color:#222;">21</div>
<div class="a" style="left:568.2px;width:300px;text-align:right;top:656.7px;font-size:6.6px;color:#222;">22</div>
<div class="a" style="left:607.0px;width:300px;text-align:right;top:656.7px;font-size:6.6px;color:#222;">23</div>
<div class="a" style="left:645.8px;width:300px;text-align:right;top:656.7px;font-size:6.6px;color:#222;">24</div>
<div class="a" style="left:684.6px;width:300px;text-align:right;top:656.7px;font-size:6.6px;color:#222;">25</div>
<div class="a" style="left:723.4px;width:300px;text-align:right;top:656.7px;font-size:6.6px;color:#222;">26</div>
<div class="a" style="left:762.2px;width:300px;text-align:right;top:656.7px;font-size:6.6px;color:#222;">27</div>
<div class="a" style="left:801.0px;width:300px;text-align:right;top:656.7px;font-size:6.6px;color:#222;">28</div>
<div class="a" style="left:839.8px;width:300px;text-align:right;top:656.7px;font-size:6.6px;color:#222;">29</div>
<div class="a" style="left:878.6px;width:300px;text-align:right;top:656.7px;font-size:6.6px;color:#222;">30</div>
<div class="a" style="left:917.4px;width:300px;text-align:right;top:656.7px;font-size:6.6px;color:#222;">31</div>
<div class="a" style="left:1261.0px;top:436.9px;font-size:6.6px;color:#222;">1002</div>
<div class="a" style="left:1261.0px;top:458.5px;font-size:6.6px;color:#222;">1002</div>
<div class="a" style="left:1261.0px;top:480.1px;font-size:6.6px;color:#222;">1002</div>
<div class="a" style="left:1261.0px;top:501.7px;font-size:6.6px;color:#222;">1002</div>
<div class="a" style="left:1261.0px;top:523.3px;font-size:6.6px;color:#222;">1001</div>
<div class="a" style="left:1261.0px;top:544.9px;font-size:6.6px;color:#222;">1001</div>
<div class="a" style="left:1261.0px;top:566.5px;font-size:6.6px;color:#222;">1001</div>
<div class="a" style="left:1261.0px;top:588.1px;font-size:6.6px;color:#222;">1001</div>
<div class="a" style="left:1261.0px;top:609.7px;font-size:6.6px;color:#222;">1000</div>
<div class="a" style="left:1261.0px;top:631.3px;font-size:6.6px;color:#222;">1000</div>
<div class="a" style="left:1261.0px;top:652.9px;font-size:6.6px;color:#222;">1000</div>
<div class="b" style="left:11px;top:667px;width:1269px;height:16px;background:#f0f0f0"></div>
<div class="b" style="left:93px;top:666px;width:34.5px;height:13.5px;background:#fff;border:1.2px solid #3c3c3c;border-top:none"></div>
<div class="a" style="left:19.5px;top:669.1px;font-size:7.7px;color:#7c7c7c;">Settings</div>
<div class="a" style="left:61.0px;top:669.1px;font-size:7.7px;color:#7c7c7c;">Results</div>
<div class="a" style="left:99.0px;top:669.1px;font-size:7.7px;color:#1e1e1e;">Graph</div>
<div class="a" style="left:134.0px;top:669.1px;font-size:7.7px;color:#7c7c7c;">Report</div>
<div class="a" style="left:171.0px;top:669.1px;font-size:7.7px;color:#7c7c7c;">Journal</div>
<div class="b" style="left:54.5px;top:669px;width:1px;height:9px;background:#8a8a8a"></div>
<div class="b" style="left:165px;top:669px;width:1px;height:9px;background:#8a8a8a"></div>
<div class="b" style="left:203.5px;top:669px;width:1px;height:9px;background:#8a8a8a"></div>
<div class="b" style="left:0px;top:683px;width:1280px;height:16px;background:#f0f0f0;border-top:1px solid #cfcfcf;border-bottom-left-radius:6px"></div>
<div class="a" style="left:2.0px;top:688.2px;font-size:7.6px;color:#1e1e1e;">For Help, press F1</div>
<div class="b" style="left:811.3px;top:685px;width:1px;height:12px;background:#d2d2d2"></div>
<div class="b" style="left:889.4px;top:685px;width:1px;height:12px;background:#d2d2d2"></div>
<div class="b" style="left:957.7px;top:685px;width:1px;height:12px;background:#d2d2d2"></div>
<div class="b" style="left:1005.4px;top:685px;width:1px;height:12px;background:#d2d2d2"></div>
<div class="b" style="left:1053.4px;top:685px;width:1px;height:12px;background:#d2d2d2"></div>
<div class="b" style="left:1099.5px;top:685px;width:1px;height:12px;background:#d2d2d2"></div>
<div class="b" style="left:1146.4px;top:685px;width:1px;height:12px;background:#d2d2d2"></div>
<div class="b" style="left:1192px;top:685px;width:1px;height:12px;background:#d2d2d2"></div>
<div class="a" style="left:815.0px;top:688.2px;font-size:7.6px;color:#1e1e1e;">Default</div>
<svg style="left:1193px;top:686px" width="18" height="11"><rect x="1" y="6.0" width="1.3" height="3.0" fill="#2f6a95"/><rect x="1" y="1" width="1.3" height="5.0" fill="#7aa040"/><rect x="3" y="5.2" width="1.3" height="3.8" fill="#2f6a95"/><rect x="3" y="1" width="1.3" height="4.2" fill="#7aa040"/><rect x="5" y="4.4" width="1.3" height="4.6" fill="#2f6a95"/><rect x="5" y="1" width="1.3" height="3.4" fill="#7aa040"/><rect x="7" y="3.6" width="1.3" height="5.4" fill="#2f6a95"/><rect x="7" y="1" width="1.3" height="2.6" fill="#7aa040"/><rect x="9" y="2.8" width="1.3" height="6.2" fill="#2f6a95"/><rect x="9" y="1" width="1.3" height="1.8" fill="#7aa040"/><rect x="11" y="2.0" width="1.3" height="7.0" fill="#2f6a95"/><rect x="11" y="1" width="1.3" height="1.0" fill="#7aa040"/><rect x="13" y="1.2" width="1.3" height="7.8" fill="#2f6a95"/><rect x="13" y="1" width="1.3" height="0.2" fill="#7aa040"/><rect x="15" y="0.4" width="1.3" height="8.6" fill="#2f6a95"/><rect x="15" y="1" width="1.3" height="0.0" fill="#7aa040"/></svg>
<div class="a" style="left:1212.0px;top:688.2px;font-size:7.6px;color:#1e1e1e;">1982/3 kb</div>
<div class="b" style="left:0px;top:699px;width:1280px;height:21px;background:linear-gradient(90deg,#c1c5d0,#c9ccd5 40%,#c7cad4 70%,#cdd0d8)"></div>
<svg style="left:0;top:699px" width="1280" height="21"><circle cx="16" cy="10.8" r="6.8" fill="#ec9a18"/><circle cx="16.5" cy="12" r="5.5" fill="#e8700e" opacity="0.55"/><circle cx="20.6" cy="5.2" r="4.6" fill="#b82222"/><text x="18.7" y="7.6" font-size="6.5" fill="#fff" font-family="Liberation Sans" font-weight="bold">2</text><rect x="380" y="4" width="7" height="7" fill="#1a8ad8"/><rect x="388" y="4" width="7" height="7" fill="#1a8ad8"/><rect x="380" y="12" width="7" height="7" fill="#1a8ad8"/><rect x="388" y="12" width="7" height="7" fill="#1a8ad8"/><rect x="405" y="3.5" width="145" height="17" rx="8.5" fill="#e0e1e6" stroke="#c8c9cf" stroke-width="0.7"/><circle cx="416.5" cy="10.5" r="3.8" fill="none" stroke="#222" stroke-width="1.3"/><path d="M419 13 l3 3" stroke="#222" stroke-width="1.5"/><rect x="560" y="8" width="9" height="10" fill="#222"/><rect x="564" y="4" width="9" height="10" fill="#ccc" opacity="0.9"/><rect x="590" y="5" width="16" height="14" fill="#ecc900"/><rect x="594" y="11" width="8" height="1.5" fill="#5a4a00"/><path d="M620 7 q7 -6 14 2 q-2 10 -12 8 q-5 -4 -2 -10z" fill="#7c5ce0"/><path d="M622 14 q6 5 11 -3" stroke="#f06090" stroke-width="3" fill="none"/><path d="M622 9 q4 -3 9 0" stroke="#30c0a0" stroke-width="2.5" fill="none"/><path d="M649 6 h6 l1.5 2 h9 v11 h-16.5z" fill="#e8b830"/><rect x="649" y="12" width="16.5" height="7" fill="#3aa0e0"/><circle cx="686" cy="12" r="7" fill="#1f8fd8"/><path d="M680 12 q6 -9 12 -1" stroke="#5ad27a" stroke-width="3" fill="none"/><rect x="678" y="14" width="6" height="5" fill="#a86a20"/><circle cx="715" cy="12" r="7.5" fill="#db4437"/><path d="M715 12 L708.5 15.8 A7.5 7.5 0 0 1 715 4.5z" fill="#0f9d58"/><path d="M715 12 L721.5 15.8 A7.5 7.5 0 0 1 708.5 15.8z" fill="#f4b400"/><circle cx="715" cy="12" r="3.4" fill="#fff"/><circle cx="715" cy="12" r="2.6" fill="#4285f4"/><rect x="737" y="6" width="15" height="14" rx="2" fill="#1e4a8a"/><rect x="741" y="9" width="3" height="3" fill="#f25022"/><rect x="745" y="9" width="3" height="3" fill="#7fba00"/><rect x="741" y="13" width="3" height="3" fill="#00a4ef"/><rect x="745" y="13" width="3" height="3" fill="#ffb900"/><rect x="762" y="0" width="24" height="21" fill="#dcdde2" opacity="0.7"/><rect x="767" y="5" width="15" height="14" fill="#ecc900"/><rect x="770" y="11" width="9" height="1.5" fill="#5a4a00"/><rect x="791" y="0" width="27" height="21" fill="#e0a8a8" opacity="0.75"/><circle cx="805" cy="13" r="6.5" fill="#2a90d0"/><path d="M801 13 l8 -3 l-2 6z" fill="#fff"/><circle cx="810" cy="5.5" r="4" fill="#e03030"/><text x="808.3" y="8" font-size="6" fill="#fff" font-family="Liberation Sans">5</text><rect x="827" y="6" width="14" height="13" rx="1.5" fill="#1e7a3e"/><rect x="831" y="4" width="11" height="15" fill="#2aa050"/><text x="828.5" y="17" font-size="7" fill="#fff" font-family="Liberation Sans" font-weight="bold">x</text><circle cx="864" cy="13" r="7" fill="#db4437"/><path d="M864 13 L858 16.5 A7 7 0 0 1 864 6z" fill="#0f9d58"/><path d="M864 13 L870 16.5 A7 7 0 0 1 858 16.5z" fill="#f4b400"/><circle cx="864" cy="13" r="3.1" fill="#fff"/><circle cx="864" cy="13" r="2.3" fill="#4285f4"/><circle cx="869" cy="7" r="4" fill="#c08070"/><circle cx="893" cy="13" r="7" fill="#db4437"/><path d="M893 13 L887 16.5 A7 7 0 0 1 893 6z" fill="#0f9d58"/><path d="M893 13 L899 16.5 A7 7 0 0 1 887 16.5z" fill="#f4b400"/><circle cx="893" cy="13" r="3.1" fill="#fff"/><circle cx="893" cy="13" r="2.3" fill="#4285f4"/><circle cx="898" cy="7" r="4" fill="#d8dce6"/><path d="M1084 12 l3 -3 l3 3" stroke="#222" stroke-width="1.1" fill="none"/><circle cx="1108" cy="12" r="4.5" fill="#3a80d8"/><circle cx="1111" cy="14" r="3" fill="#5aa0e8" stroke="#fff" stroke-width="0.8"/><path d="M1126 10 a5 5 0 0 1 9 -1 M1136 13 a5 5 0 0 1 -9 1" stroke="#333" stroke-width="1" fill="none"/><circle cx="1133.5" cy="15" r="2.3" fill="#f08a10"/><rect x="1176" y="7" width="9" height="8" fill="none" stroke="#333" stroke-width="1"/><path d="M1178 17 h5" stroke="#333"/><circle cx="1185" cy="7" r="1.8" fill="none" stroke="#333" stroke-width="0.8"/><path d="M1194 10 q3 -3 6 0 v3 h-6z" fill="none" stroke="#333" stroke-width="0.9"/><circle cx="1200" cy="14" r="2.4" fill="#333"/><path d="M1262 9 q0 -5 4 -5 q4 0 4 5 v4 l1 2 h-10 l1 -2z" fill="#222"/><rect x="1265" y="7" width="3" height="3" fill="#fff" opacity="0.6"/></svg>
<div class="a" style="left:29.0px;top:700.9px;font-size:7.8px;color:#333;-webkit-text-stroke:0;">27°C</div>
<div class="a" style="left:29.0px;top:711.1px;font-size:7.8px;color:#555;-webkit-text-stroke:0;">Sunny</div>
<div class="a" style="left:429.0px;top:706.2px;font-size:8px;color:#555;-webkit-text-stroke:0;">Search</div>
<div class="a" style="left:1056.0px;width:200px;text-align:center;top:701.1px;font-size:7.4px;color:#222;-webkit-text-stroke:0;">ENG</div>
<div class="a" style="left:1056.0px;width:200px;text-align:center;top:711.3px;font-size:7.4px;color:#222;-webkit-text-stroke:0;">IN</div>
<div class="a" style="left:956.0px;width:300px;text-align:right;top:700.8px;font-size:8px;color:#222;-webkit-text-stroke:0;">12:29</div>
<div class="a" style="left:956.0px;width:300px;text-align:right;top:711.0px;font-size:8px;color:#222;-webkit-text-stroke:0;">14-11-2025</div>
</body></html>
